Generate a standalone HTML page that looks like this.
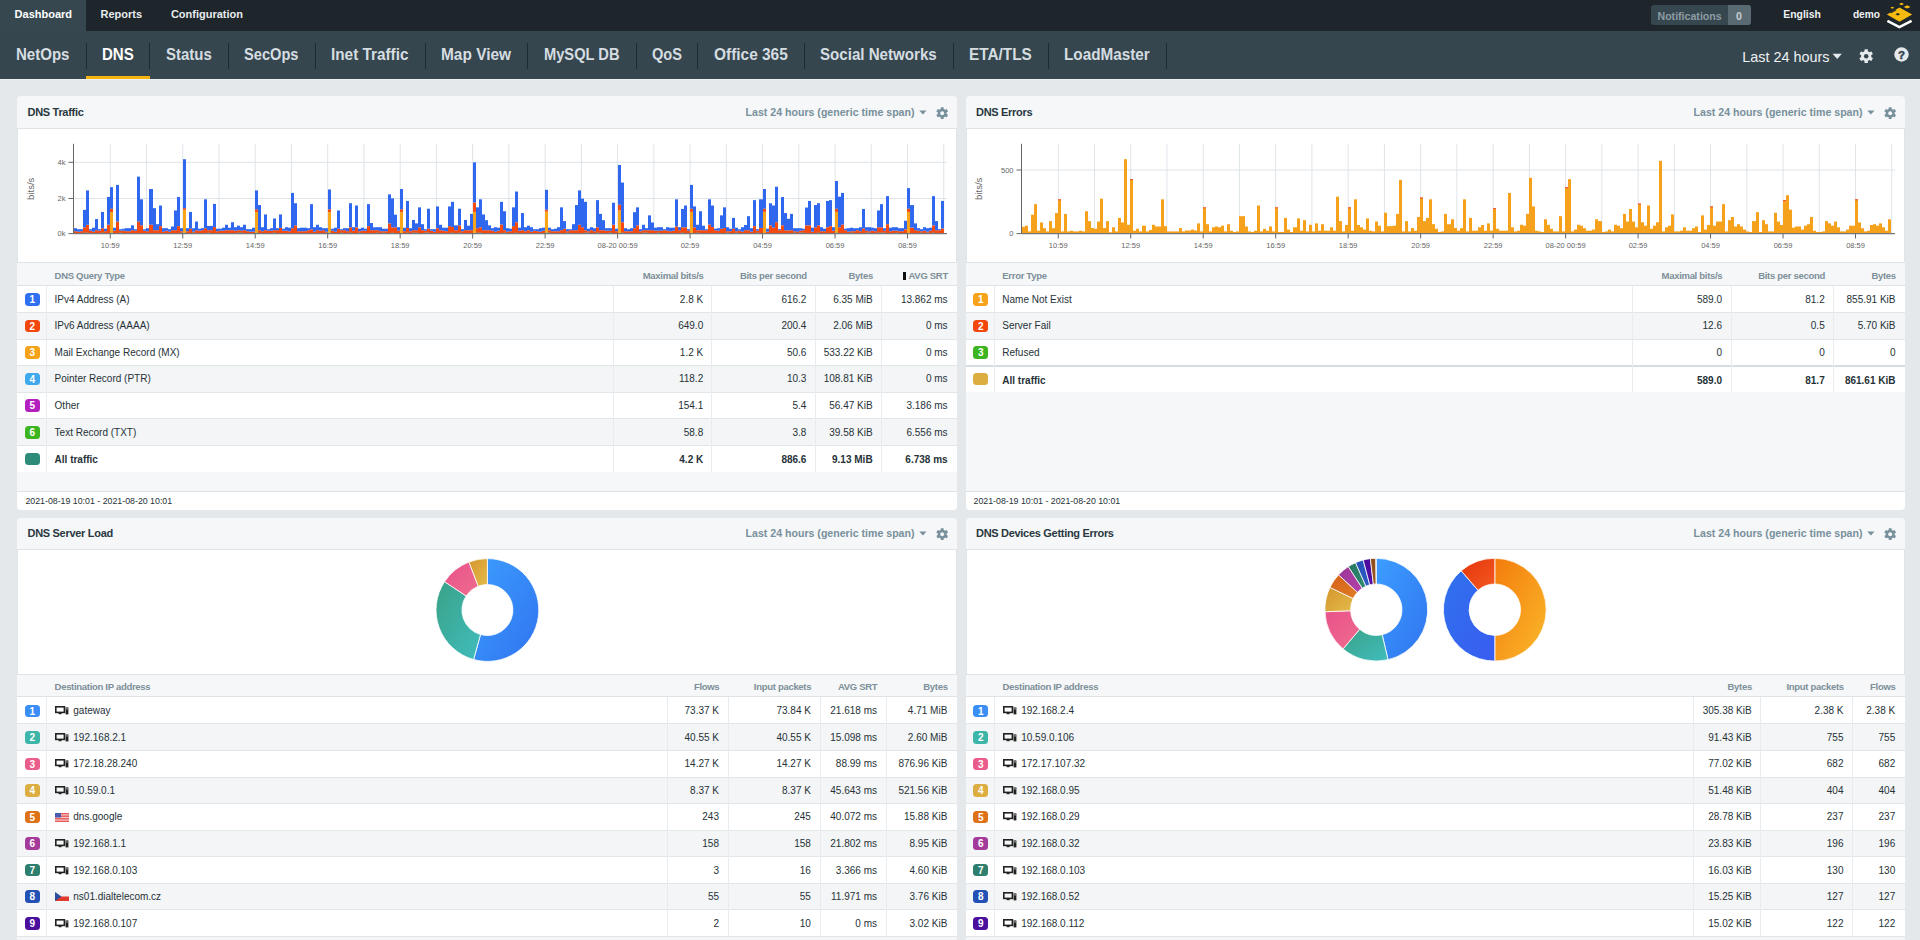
<!DOCTYPE html><html><head><meta charset="utf-8"><style>
html,body{margin:0;padding:0;width:1920px;height:940px;overflow:hidden;background:#e4e8eb;font-family:"Liberation Sans", sans-serif;}
.r{position:absolute;box-sizing:border-box}
.t{position:absolute;white-space:nowrap;line-height:1.2}
svg text{font-family:"Liberation Sans",sans-serif}
</style></head><body>
<div class="r" style="left:0px;top:0px;width:1920px;height:31px;background:#1e252b;"></div>
<div class="r" style="left:0px;top:0px;width:86px;height:31px;background:#37474f;"></div>
<div class="t" style="left:14.60px;top:7.60px;font-size:11px;font-weight:700;color:#ffffff;">Dashboard</div>
<div class="t" style="left:100.50px;top:7.60px;font-size:11px;font-weight:700;color:#e8ecee;">Reports</div>
<div class="t" style="left:170.90px;top:7.60px;font-size:11px;font-weight:700;color:#e8ecee;">Configuration</div>
<div class="r" style="left:1651px;top:5px;width:100px;height:20px;background:#37474f;border-radius:3px"></div>
<div class="r" style="left:1728px;top:5px;width:23px;height:20px;background:#5a6a72;border-radius:0 3px 3px 0"></div>
<div class="t" style="left:1657.50px;top:9.84px;font-size:10.6px;font-weight:700;color:#8d9ca4;">Notifications</div>
<div class="t" style="left:1736.00px;top:9.84px;font-size:10.6px;font-weight:700;color:#c9d1d5;">0</div>
<div class="t" style="left:1783.30px;top:8.96px;font-size:10.4px;font-weight:700;color:#eef1f3;">English</div>
<div class="t" style="left:1852.90px;top:9.08px;font-size:10.2px;font-weight:700;color:#eef1f3;">demo</div>
<svg style="position:absolute;left:1880px;top:0px" width="40" height="31" viewBox="1880 0 40 31">
<path d="M1886.9 14.4 L1899.5 7.6 L1912.2 14.4 L1899.5 21.8 Z" fill="#f6bb0e"/>
<path d="M1895.3 14.2 L1897.8 12.9 L1900.2 14.2 L1897.8 15.5 Z" fill="#1e252b"/>
<path d="M1890.2 12.6 L1895.6 9.7 L1896.6 10.3 L1891.2 13.2 Z" fill="#1e252b"/>
<path d="M1890.3 7.7 L1892.3 6.7 L1894.3 7.7 L1892.3 8.7 Z" fill="#f6bb0e"/>
<path d="M1899 4 L1901.5 2.7 L1904 4 L1901.5 5.3 Z" fill="#f6bb0e"/>
<path d="M1903.7 6.9 L1907.1 5.2 L1910.5 6.9 L1907.1 8.6 Z" fill="#f6bb0e"/>
<path d="M1887.4 20.9 L1899.4 27 L1911.6 20.9" fill="none" stroke="#ffffff" stroke-width="2.5" stroke-linejoin="miter"/>
</svg>
<div class="r" style="left:0px;top:31px;width:1920px;height:48px;background:#36464e;"></div>
<div class="t" style="left:16.2px;top:44.6px;font-size:16px;font-weight:700;color:#d5dde1;transform:scaleX(0.940);transform-origin:0 0">NetOps</div>
<div class="t" style="left:101.6px;top:44.6px;font-size:16px;font-weight:700;color:#ffffff;transform:scaleX(0.941);transform-origin:0 0">DNS</div>
<div class="t" style="left:165.5px;top:44.6px;font-size:16px;font-weight:700;color:#d5dde1;transform:scaleX(0.935);transform-origin:0 0">Status</div>
<div class="t" style="left:243.75px;top:44.6px;font-size:16px;font-weight:700;color:#d5dde1;transform:scaleX(0.914);transform-origin:0 0">SecOps</div>
<div class="t" style="left:330.75px;top:44.6px;font-size:16px;font-weight:700;color:#d5dde1;transform:scaleX(0.958);transform-origin:0 0">Inet Traffic</div>
<div class="t" style="left:440.8px;top:44.6px;font-size:16px;font-weight:700;color:#d5dde1;transform:scaleX(0.964);transform-origin:0 0">Map View</div>
<div class="t" style="left:543.75px;top:44.6px;font-size:16px;font-weight:700;color:#d5dde1;transform:scaleX(0.916);transform-origin:0 0">MySQL DB</div>
<div class="t" style="left:651.7px;top:44.6px;font-size:16px;font-weight:700;color:#d5dde1;transform:scaleX(0.912);transform-origin:0 0">QoS</div>
<div class="t" style="left:713.75px;top:44.6px;font-size:16px;font-weight:700;color:#d5dde1;transform:scaleX(0.964);transform-origin:0 0">Office 365</div>
<div class="t" style="left:820px;top:44.6px;font-size:16px;font-weight:700;color:#d5dde1;transform:scaleX(0.944);transform-origin:0 0">Social Networks</div>
<div class="t" style="left:969.2px;top:44.6px;font-size:16px;font-weight:700;color:#d5dde1;transform:scaleX(0.959);transform-origin:0 0">ETA/TLS</div>
<div class="t" style="left:1064.2px;top:44.6px;font-size:16px;font-weight:700;color:#d5dde1;transform:scaleX(0.955);transform-origin:0 0">LoadMaster</div>
<div class="r" style="left:85.8px;top:43px;width:1px;height:26px;background:#1f2a30;"></div>
<div class="r" style="left:149.1px;top:43px;width:1px;height:26px;background:#1f2a30;"></div>
<div class="r" style="left:228.1px;top:43px;width:1px;height:26px;background:#1f2a30;"></div>
<div class="r" style="left:315.0px;top:43px;width:1px;height:26px;background:#1f2a30;"></div>
<div class="r" style="left:425.1px;top:43px;width:1px;height:26px;background:#1f2a30;"></div>
<div class="r" style="left:527.0px;top:43px;width:1px;height:26px;background:#1f2a30;"></div>
<div class="r" style="left:636.2px;top:43px;width:1px;height:26px;background:#1f2a30;"></div>
<div class="r" style="left:697.0px;top:43px;width:1px;height:26px;background:#1f2a30;"></div>
<div class="r" style="left:804.1px;top:43px;width:1px;height:26px;background:#1f2a30;"></div>
<div class="r" style="left:952.8px;top:43px;width:1px;height:26px;background:#1f2a30;"></div>
<div class="r" style="left:1048.2px;top:43px;width:1px;height:26px;background:#1f2a30;"></div>
<div class="r" style="left:1166.2px;top:43px;width:1px;height:26px;background:#1f2a30;"></div>
<div class="r" style="left:86px;top:76px;width:63.5px;height:3px;background:#f6b50e;"></div>
<div class="t" style="left:1742.20px;top:49.16px;font-size:14.4px;font-weight:400;color:#eef1f3;">Last 24 hours</div>
<svg style="position:absolute;left:1832px;top:53px" width="11" height="7" viewBox="0 0 11 7"><path d="M0.5 0.8h9.4L5.2 6z" fill="#e6eaec"/></svg>
<svg style="position:absolute;left:1859.11px;top:48.61px" width="14.38" height="14.38" viewBox="-6.2 -6.2 12.4 12.4"><circle cx="0" cy="0" r="4.4" fill="#e6eaec"/><rect x="-1.45" y="-5.95" width="2.9" height="11.9" rx="0.3" fill="#e6eaec" transform="rotate(0)"/><rect x="-1.45" y="-5.95" width="2.9" height="11.9" rx="0.3" fill="#e6eaec" transform="rotate(60)"/><rect x="-1.45" y="-5.95" width="2.9" height="11.9" rx="0.3" fill="#e6eaec" transform="rotate(120)"/><circle cx="0" cy="0" r="1.95" fill="#36464e"/></svg>
<svg style="position:absolute;left:1893px;top:46px" width="17" height="17" viewBox="0 0 17 17"><circle cx="8.5" cy="8.5" r="7.2" fill="#e6eaec"/><text x="8.5" y="12.6" text-anchor="middle" font-size="11.5" font-weight="700" fill="#36464e" stroke="#36464e" stroke-width="0.5">?</text></svg>
<div class="r" style="left:0px;top:79px;width:1920px;height:1px;background:#eef1f3;"></div>
<div class="r" style="left:17px;top:96px;width:940px;height:414px;background:#fff;border-radius:4px;border:1px solid #dfe4e7;overflow:hidden"></div>
<div class="r" style="left:17px;top:96px;width:940px;height:33px;background:#f5f7f8;border-radius:4px 4px 0 0;border-bottom:1px solid #dde3e6"></div>
<div class="t" style="left:27.50px;top:106.20px;font-size:11px;font-weight:700;color:#2a3840;letter-spacing:-0.3px">DNS Traffic</div>
<div class="t" style="right:1005.50px;top:105.64px;font-size:10.6px;font-weight:700;color:#78909c;text-align:right;letter-spacing:0px">Last 24 hours (generic time span)</div>
<svg style="position:absolute;left:918.5px;top:110px" width="8" height="5" viewBox="0 0 8 5"><path d="M0.3 0.5h7.2L3.9 4.6z" fill="#78909c"/></svg>
<svg style="position:absolute;left:936.00px;top:106.60px" width="12.40" height="12.40" viewBox="-6.2 -6.2 12.4 12.4"><circle cx="0" cy="0" r="4.4" fill="#78909c"/><rect x="-1.45" y="-5.95" width="2.9" height="11.9" rx="0.3" fill="#78909c" transform="rotate(0)"/><rect x="-1.45" y="-5.95" width="2.9" height="11.9" rx="0.3" fill="#78909c" transform="rotate(60)"/><rect x="-1.45" y="-5.95" width="2.9" height="11.9" rx="0.3" fill="#78909c" transform="rotate(120)"/><circle cx="0" cy="0" r="1.95" fill="#f5f7f8"/></svg>
<div class="r" style="left:17px;top:471.5px;width:940px;height:20px;background:#f5f7f8;"></div>
<div class="r" style="left:17px;top:262px;width:940px;height:23.8px;background:#f5f7f8;border-top:1px solid #dde3e6;border-bottom:1px solid #dde3e6"></div>
<div class="t" style="left:54.60px;top:270.10px;font-size:9.5px;font-weight:700;color:#7d8f98;letter-spacing:-0.3px">DNS Query Type</div>
<div class="t" style="right:1216.50px;top:270.10px;font-size:9.5px;font-weight:700;color:#7d8f98;text-align:right;letter-spacing:-0.3px">Maximal bits/s</div>
<div class="t" style="right:1113.30px;top:270.10px;font-size:9.5px;font-weight:700;color:#7d8f98;text-align:right;letter-spacing:-0.3px">Bits per second</div>
<div class="t" style="right:1047.10px;top:270.10px;font-size:9.5px;font-weight:700;color:#7d8f98;text-align:right;letter-spacing:-0.3px">Bytes</div>
<div class="r" style="left:903.4px;top:271.59999999999997px;width:3px;height:8.4px;background:#111;"></div>
<div class="t" style="right:972.10px;top:270.10px;font-size:9.5px;font-weight:700;color:#7d8f98;text-align:right;letter-spacing:-0.3px">AVG SRT</div>
<div class="r" style="left:17px;top:285.80px;width:940px;height:26.60px;background:#ffffff"></div>
<div class="r" style="left:17px;top:312.40px;width:940px;height:26.60px;background:#f3f5f6"></div>
<div class="r" style="left:17px;top:339.00px;width:940px;height:26.60px;background:#ffffff"></div>
<div class="r" style="left:17px;top:365.60px;width:940px;height:26.60px;background:#f3f5f6"></div>
<div class="r" style="left:17px;top:392.20px;width:940px;height:26.60px;background:#ffffff"></div>
<div class="r" style="left:17px;top:418.80px;width:940px;height:26.60px;background:#f3f5f6"></div>
<div class="r" style="left:17px;top:445.40px;width:940px;height:26.60px;background:#ffffff"></div>
<div class="r" style="left:17px;top:311.90px;width:940px;height:1px;background:#e1e6e9"></div>
<div class="r" style="left:17px;top:338.50px;width:940px;height:1px;background:#e1e6e9"></div>
<div class="r" style="left:17px;top:365.10px;width:940px;height:1px;background:#e1e6e9"></div>
<div class="r" style="left:17px;top:391.70px;width:940px;height:1px;background:#e1e6e9"></div>
<div class="r" style="left:17px;top:418.30px;width:940px;height:1px;background:#e1e6e9"></div>
<div class="r" style="left:17px;top:444.90px;width:940px;height:1px;background:#e1e6e9"></div>
<div class="r" style="left:46px;top:285.80px;width:1px;height:26.60px;background:#e8ecf0"></div>
<div class="r" style="left:613px;top:285.80px;width:1px;height:26.60px;background:#e8ecf0"></div>
<div class="r" style="left:711px;top:285.80px;width:1px;height:26.60px;background:#e8ecf0"></div>
<div class="r" style="left:815px;top:285.80px;width:1px;height:26.60px;background:#e8ecf0"></div>
<div class="r" style="left:881px;top:285.80px;width:1px;height:26.60px;background:#e8ecf0"></div>
<div class="r" style="left:24.8px;top:293.00px;width:15px;height:12.6px;border-radius:3.5px;background:#2f6ff0;color:#fff;font-size:10px;font-weight:700;text-align:center;line-height:13px">1</div>
<div class="t" style="left:54.60px;top:293.65px;font-size:10px;font-weight:400;color:#263238;">IPv4 Address (A)</div>
<div class="t" style="right:1216.80px;top:293.65px;font-size:10px;font-weight:400;color:#263238;text-align:right;">2.8 K</div>
<div class="t" style="right:1113.60px;top:293.65px;font-size:10px;font-weight:400;color:#263238;text-align:right;">616.2</div>
<div class="t" style="right:1047.40px;top:293.65px;font-size:10px;font-weight:400;color:#263238;text-align:right;">6.35 MiB</div>
<div class="t" style="right:972.40px;top:293.65px;font-size:10px;font-weight:400;color:#263238;text-align:right;">13.862 ms</div>
<div class="r" style="left:46px;top:312.40px;width:1px;height:26.60px;background:#e8ecf0"></div>
<div class="r" style="left:613px;top:312.40px;width:1px;height:26.60px;background:#e8ecf0"></div>
<div class="r" style="left:711px;top:312.40px;width:1px;height:26.60px;background:#e8ecf0"></div>
<div class="r" style="left:815px;top:312.40px;width:1px;height:26.60px;background:#e8ecf0"></div>
<div class="r" style="left:881px;top:312.40px;width:1px;height:26.60px;background:#e8ecf0"></div>
<div class="r" style="left:24.8px;top:319.60px;width:15px;height:12.6px;border-radius:3.5px;background:#f2460d;color:#fff;font-size:10px;font-weight:700;text-align:center;line-height:13px">2</div>
<div class="t" style="left:54.60px;top:320.25px;font-size:10px;font-weight:400;color:#263238;">IPv6 Address (AAAA)</div>
<div class="t" style="right:1216.80px;top:320.25px;font-size:10px;font-weight:400;color:#263238;text-align:right;">649.0</div>
<div class="t" style="right:1113.60px;top:320.25px;font-size:10px;font-weight:400;color:#263238;text-align:right;">200.4</div>
<div class="t" style="right:1047.40px;top:320.25px;font-size:10px;font-weight:400;color:#263238;text-align:right;">2.06 MiB</div>
<div class="t" style="right:972.40px;top:320.25px;font-size:10px;font-weight:400;color:#263238;text-align:right;">0 ms</div>
<div class="r" style="left:46px;top:339.00px;width:1px;height:26.60px;background:#e8ecf0"></div>
<div class="r" style="left:613px;top:339.00px;width:1px;height:26.60px;background:#e8ecf0"></div>
<div class="r" style="left:711px;top:339.00px;width:1px;height:26.60px;background:#e8ecf0"></div>
<div class="r" style="left:815px;top:339.00px;width:1px;height:26.60px;background:#e8ecf0"></div>
<div class="r" style="left:881px;top:339.00px;width:1px;height:26.60px;background:#e8ecf0"></div>
<div class="r" style="left:24.8px;top:346.20px;width:15px;height:12.6px;border-radius:3.5px;background:#f7a21b;color:#fff;font-size:10px;font-weight:700;text-align:center;line-height:13px">3</div>
<div class="t" style="left:54.60px;top:346.85px;font-size:10px;font-weight:400;color:#263238;">Mail Exchange Record (MX)</div>
<div class="t" style="right:1216.80px;top:346.85px;font-size:10px;font-weight:400;color:#263238;text-align:right;">1.2 K</div>
<div class="t" style="right:1113.60px;top:346.85px;font-size:10px;font-weight:400;color:#263238;text-align:right;">50.6</div>
<div class="t" style="right:1047.40px;top:346.85px;font-size:10px;font-weight:400;color:#263238;text-align:right;">533.22 KiB</div>
<div class="t" style="right:972.40px;top:346.85px;font-size:10px;font-weight:400;color:#263238;text-align:right;">0 ms</div>
<div class="r" style="left:46px;top:365.60px;width:1px;height:26.60px;background:#e8ecf0"></div>
<div class="r" style="left:613px;top:365.60px;width:1px;height:26.60px;background:#e8ecf0"></div>
<div class="r" style="left:711px;top:365.60px;width:1px;height:26.60px;background:#e8ecf0"></div>
<div class="r" style="left:815px;top:365.60px;width:1px;height:26.60px;background:#e8ecf0"></div>
<div class="r" style="left:881px;top:365.60px;width:1px;height:26.60px;background:#e8ecf0"></div>
<div class="r" style="left:24.8px;top:372.80px;width:15px;height:12.6px;border-radius:3.5px;background:#3fa9ec;color:#fff;font-size:10px;font-weight:700;text-align:center;line-height:13px">4</div>
<div class="t" style="left:54.60px;top:373.45px;font-size:10px;font-weight:400;color:#263238;">Pointer Record (PTR)</div>
<div class="t" style="right:1216.80px;top:373.45px;font-size:10px;font-weight:400;color:#263238;text-align:right;">118.2</div>
<div class="t" style="right:1113.60px;top:373.45px;font-size:10px;font-weight:400;color:#263238;text-align:right;">10.3</div>
<div class="t" style="right:1047.40px;top:373.45px;font-size:10px;font-weight:400;color:#263238;text-align:right;">108.81 KiB</div>
<div class="t" style="right:972.40px;top:373.45px;font-size:10px;font-weight:400;color:#263238;text-align:right;">0 ms</div>
<div class="r" style="left:46px;top:392.20px;width:1px;height:26.60px;background:#e8ecf0"></div>
<div class="r" style="left:613px;top:392.20px;width:1px;height:26.60px;background:#e8ecf0"></div>
<div class="r" style="left:711px;top:392.20px;width:1px;height:26.60px;background:#e8ecf0"></div>
<div class="r" style="left:815px;top:392.20px;width:1px;height:26.60px;background:#e8ecf0"></div>
<div class="r" style="left:881px;top:392.20px;width:1px;height:26.60px;background:#e8ecf0"></div>
<div class="r" style="left:24.8px;top:399.40px;width:15px;height:12.6px;border-radius:3.5px;background:#b41fc0;color:#fff;font-size:10px;font-weight:700;text-align:center;line-height:13px">5</div>
<div class="t" style="left:54.60px;top:400.05px;font-size:10px;font-weight:400;color:#263238;">Other</div>
<div class="t" style="right:1216.80px;top:400.05px;font-size:10px;font-weight:400;color:#263238;text-align:right;">154.1</div>
<div class="t" style="right:1113.60px;top:400.05px;font-size:10px;font-weight:400;color:#263238;text-align:right;">5.4</div>
<div class="t" style="right:1047.40px;top:400.05px;font-size:10px;font-weight:400;color:#263238;text-align:right;">56.47 KiB</div>
<div class="t" style="right:972.40px;top:400.05px;font-size:10px;font-weight:400;color:#263238;text-align:right;">3.186 ms</div>
<div class="r" style="left:46px;top:418.80px;width:1px;height:26.60px;background:#e8ecf0"></div>
<div class="r" style="left:613px;top:418.80px;width:1px;height:26.60px;background:#e8ecf0"></div>
<div class="r" style="left:711px;top:418.80px;width:1px;height:26.60px;background:#e8ecf0"></div>
<div class="r" style="left:815px;top:418.80px;width:1px;height:26.60px;background:#e8ecf0"></div>
<div class="r" style="left:881px;top:418.80px;width:1px;height:26.60px;background:#e8ecf0"></div>
<div class="r" style="left:24.8px;top:426.00px;width:15px;height:12.6px;border-radius:3.5px;background:#3cb521;color:#fff;font-size:10px;font-weight:700;text-align:center;line-height:13px">6</div>
<div class="t" style="left:54.60px;top:426.65px;font-size:10px;font-weight:400;color:#263238;">Text Record (TXT)</div>
<div class="t" style="right:1216.80px;top:426.65px;font-size:10px;font-weight:400;color:#263238;text-align:right;">58.8</div>
<div class="t" style="right:1113.60px;top:426.65px;font-size:10px;font-weight:400;color:#263238;text-align:right;">3.8</div>
<div class="t" style="right:1047.40px;top:426.65px;font-size:10px;font-weight:400;color:#263238;text-align:right;">39.58 KiB</div>
<div class="t" style="right:972.40px;top:426.65px;font-size:10px;font-weight:400;color:#263238;text-align:right;">6.556 ms</div>
<div class="r" style="left:46px;top:445.40px;width:1px;height:26.60px;background:#e8ecf0"></div>
<div class="r" style="left:613px;top:445.40px;width:1px;height:26.60px;background:#e8ecf0"></div>
<div class="r" style="left:711px;top:445.40px;width:1px;height:26.60px;background:#e8ecf0"></div>
<div class="r" style="left:815px;top:445.40px;width:1px;height:26.60px;background:#e8ecf0"></div>
<div class="r" style="left:881px;top:445.40px;width:1px;height:26.60px;background:#e8ecf0"></div>
<div class="r" style="left:24.8px;top:452.60px;width:15px;height:12.6px;border-radius:3.5px;background:#2e8b7a;color:#fff;font-size:10px;font-weight:700;text-align:center;line-height:13px"></div>
<div class="t" style="left:54.60px;top:454.35px;font-size:10px;font-weight:700;color:#263238;">All traffic</div>
<div class="t" style="right:1216.80px;top:454.35px;font-size:10px;font-weight:700;color:#263238;text-align:right;">4.2 K</div>
<div class="t" style="right:1113.60px;top:454.35px;font-size:10px;font-weight:700;color:#263238;text-align:right;">886.6</div>
<div class="t" style="right:1047.40px;top:454.35px;font-size:10px;font-weight:700;color:#263238;text-align:right;">9.13 MiB</div>
<div class="t" style="right:972.40px;top:454.35px;font-size:10px;font-weight:700;color:#263238;text-align:right;">6.738 ms</div>
<div class="r" style="left:17px;top:491px;width:940px;height:19.2px;background:#fff;border-top:1px solid #dde3e6;border-radius:0 0 4px 4px"></div>
<div class="t" style="left:25.40px;top:495.72px;font-size:8.8px;font-weight:400;color:#263238;">2021-08-19 10:01 - 2021-08-20 10:01</div>
<div class="r" style="left:965.5px;top:96px;width:939.5px;height:414px;background:#fff;border-radius:4px;border:1px solid #dfe4e7;overflow:hidden"></div>
<div class="r" style="left:965.5px;top:96px;width:939.5px;height:33px;background:#f5f7f8;border-radius:4px 4px 0 0;border-bottom:1px solid #dde3e6"></div>
<div class="t" style="left:976.00px;top:106.20px;font-size:11px;font-weight:700;color:#2a3840;letter-spacing:-0.3px">DNS Errors</div>
<div class="t" style="right:57.50px;top:105.64px;font-size:10.6px;font-weight:700;color:#78909c;text-align:right;letter-spacing:0px">Last 24 hours (generic time span)</div>
<svg style="position:absolute;left:1866.5px;top:110px" width="8" height="5" viewBox="0 0 8 5"><path d="M0.3 0.5h7.2L3.9 4.6z" fill="#78909c"/></svg>
<svg style="position:absolute;left:1884.00px;top:106.60px" width="12.40" height="12.40" viewBox="-6.2 -6.2 12.4 12.4"><circle cx="0" cy="0" r="4.4" fill="#78909c"/><rect x="-1.45" y="-5.95" width="2.9" height="11.9" rx="0.3" fill="#78909c" transform="rotate(0)"/><rect x="-1.45" y="-5.95" width="2.9" height="11.9" rx="0.3" fill="#78909c" transform="rotate(60)"/><rect x="-1.45" y="-5.95" width="2.9" height="11.9" rx="0.3" fill="#78909c" transform="rotate(120)"/><circle cx="0" cy="0" r="1.95" fill="#f5f7f8"/></svg>
<div class="r" style="left:965.5px;top:391.7px;width:939.5px;height:100px;background:#f5f7f8;"></div>
<div class="r" style="left:965.5px;top:262px;width:939.5px;height:23.8px;background:#f5f7f8;border-top:1px solid #dde3e6;border-bottom:1px solid #dde3e6"></div>
<div class="t" style="left:1002.30px;top:270.10px;font-size:9.5px;font-weight:700;color:#7d8f98;letter-spacing:-0.3px">Error Type</div>
<div class="t" style="right:197.70px;top:270.10px;font-size:9.5px;font-weight:700;color:#7d8f98;text-align:right;letter-spacing:-0.3px">Maximal bits/s</div>
<div class="t" style="right:95.00px;top:270.10px;font-size:9.5px;font-weight:700;color:#7d8f98;text-align:right;letter-spacing:-0.3px">Bits per second</div>
<div class="t" style="right:24.20px;top:270.10px;font-size:9.5px;font-weight:700;color:#7d8f98;text-align:right;letter-spacing:-0.3px">Bytes</div>
<div class="r" style="left:965.5px;top:285.80px;width:939.5px;height:26.60px;background:#ffffff"></div>
<div class="r" style="left:965.5px;top:312.40px;width:939.5px;height:26.60px;background:#f3f5f6"></div>
<div class="r" style="left:965.5px;top:339.00px;width:939.5px;height:26.60px;background:#ffffff"></div>
<div class="r" style="left:965.5px;top:365.60px;width:939.5px;height:26.60px;background:#ffffff"></div>
<div class="r" style="left:965.5px;top:311.90px;width:939.5px;height:1px;background:#e1e6e9"></div>
<div class="r" style="left:965.5px;top:338.50px;width:939.5px;height:1px;background:#e1e6e9"></div>
<div class="r" style="left:965.5px;top:364.60px;width:939.5px;height:2px;background:#d5dde1"></div>
<div class="r" style="left:994.4px;top:285.80px;width:1px;height:26.60px;background:#e8ecf0"></div>
<div class="r" style="left:1632px;top:285.80px;width:1px;height:26.60px;background:#e8ecf0"></div>
<div class="r" style="left:1731px;top:285.80px;width:1px;height:26.60px;background:#e8ecf0"></div>
<div class="r" style="left:1833px;top:285.80px;width:1px;height:26.60px;background:#e8ecf0"></div>
<div class="r" style="left:973.3px;top:293.00px;width:15px;height:12.6px;border-radius:3.5px;background:#f7a21b;color:#fff;font-size:10px;font-weight:700;text-align:center;line-height:13px">1</div>
<div class="t" style="left:1002.30px;top:293.65px;font-size:10px;font-weight:400;color:#263238;">Name Not Exist</div>
<div class="t" style="right:198.00px;top:293.65px;font-size:10px;font-weight:400;color:#263238;text-align:right;">589.0</div>
<div class="t" style="right:95.30px;top:293.65px;font-size:10px;font-weight:400;color:#263238;text-align:right;">81.2</div>
<div class="t" style="right:24.50px;top:293.65px;font-size:10px;font-weight:400;color:#263238;text-align:right;">855.91 KiB</div>
<div class="r" style="left:994.4px;top:312.40px;width:1px;height:26.60px;background:#e8ecf0"></div>
<div class="r" style="left:1632px;top:312.40px;width:1px;height:26.60px;background:#e8ecf0"></div>
<div class="r" style="left:1731px;top:312.40px;width:1px;height:26.60px;background:#e8ecf0"></div>
<div class="r" style="left:1833px;top:312.40px;width:1px;height:26.60px;background:#e8ecf0"></div>
<div class="r" style="left:973.3px;top:319.60px;width:15px;height:12.6px;border-radius:3.5px;background:#f2460d;color:#fff;font-size:10px;font-weight:700;text-align:center;line-height:13px">2</div>
<div class="t" style="left:1002.30px;top:320.25px;font-size:10px;font-weight:400;color:#263238;">Server Fail</div>
<div class="t" style="right:198.00px;top:320.25px;font-size:10px;font-weight:400;color:#263238;text-align:right;">12.6</div>
<div class="t" style="right:95.30px;top:320.25px;font-size:10px;font-weight:400;color:#263238;text-align:right;">0.5</div>
<div class="t" style="right:24.50px;top:320.25px;font-size:10px;font-weight:400;color:#263238;text-align:right;">5.70 KiB</div>
<div class="r" style="left:994.4px;top:339.00px;width:1px;height:26.60px;background:#e8ecf0"></div>
<div class="r" style="left:1632px;top:339.00px;width:1px;height:26.60px;background:#e8ecf0"></div>
<div class="r" style="left:1731px;top:339.00px;width:1px;height:26.60px;background:#e8ecf0"></div>
<div class="r" style="left:1833px;top:339.00px;width:1px;height:26.60px;background:#e8ecf0"></div>
<div class="r" style="left:973.3px;top:346.20px;width:15px;height:12.6px;border-radius:3.5px;background:#3cb521;color:#fff;font-size:10px;font-weight:700;text-align:center;line-height:13px">3</div>
<div class="t" style="left:1002.30px;top:346.85px;font-size:10px;font-weight:400;color:#263238;">Refused</div>
<div class="t" style="right:198.00px;top:346.85px;font-size:10px;font-weight:400;color:#263238;text-align:right;">0</div>
<div class="t" style="right:95.30px;top:346.85px;font-size:10px;font-weight:400;color:#263238;text-align:right;">0</div>
<div class="t" style="right:24.50px;top:346.85px;font-size:10px;font-weight:400;color:#263238;text-align:right;">0</div>
<div class="r" style="left:994.4px;top:365.60px;width:1px;height:26.60px;background:#e8ecf0"></div>
<div class="r" style="left:1632px;top:365.60px;width:1px;height:26.60px;background:#e8ecf0"></div>
<div class="r" style="left:1731px;top:365.60px;width:1px;height:26.60px;background:#e8ecf0"></div>
<div class="r" style="left:1833px;top:365.60px;width:1px;height:26.60px;background:#e8ecf0"></div>
<div class="r" style="left:973.3px;top:372.80px;width:15px;height:12.6px;border-radius:3.5px;background:#dcae41;color:#fff;font-size:10px;font-weight:700;text-align:center;line-height:13px"></div>
<div class="t" style="left:1002.30px;top:374.55px;font-size:10px;font-weight:700;color:#263238;">All traffic</div>
<div class="t" style="right:198.00px;top:374.55px;font-size:10px;font-weight:700;color:#263238;text-align:right;">589.0</div>
<div class="t" style="right:95.30px;top:374.55px;font-size:10px;font-weight:700;color:#263238;text-align:right;">81.7</div>
<div class="t" style="right:24.50px;top:374.55px;font-size:10px;font-weight:700;color:#263238;text-align:right;">861.61 KiB</div>
<div class="r" style="left:965.5px;top:491px;width:939.5px;height:19.2px;background:#fff;border-top:1px solid #dde3e6;border-radius:0 0 4px 4px"></div>
<div class="t" style="left:973.50px;top:495.72px;font-size:8.8px;font-weight:400;color:#263238;">2021-08-19 10:01 - 2021-08-20 10:01</div>
<div class="r" style="left:17px;top:518px;width:940px;height:430px;background:#fff;border-radius:4px;border:1px solid #dfe4e7;overflow:hidden"></div>
<div class="r" style="left:17px;top:518px;width:940px;height:32px;background:#f5f7f8;border-radius:4px 4px 0 0;border-bottom:1px solid #dde3e6"></div>
<div class="t" style="left:27.50px;top:527.35px;font-size:11px;font-weight:700;color:#2a3840;letter-spacing:-0.3px">DNS Server Load</div>
<div class="t" style="right:1005.50px;top:526.79px;font-size:10.6px;font-weight:700;color:#78909c;text-align:right;letter-spacing:0px">Last 24 hours (generic time span)</div>
<svg style="position:absolute;left:918.5px;top:531.15px" width="8" height="5" viewBox="0 0 8 5"><path d="M0.3 0.5h7.2L3.9 4.6z" fill="#78909c"/></svg>
<svg style="position:absolute;left:936.00px;top:527.75px" width="12.40" height="12.40" viewBox="-6.2 -6.2 12.4 12.4"><circle cx="0" cy="0" r="4.4" fill="#78909c"/><rect x="-1.45" y="-5.95" width="2.9" height="11.9" rx="0.3" fill="#78909c" transform="rotate(0)"/><rect x="-1.45" y="-5.95" width="2.9" height="11.9" rx="0.3" fill="#78909c" transform="rotate(60)"/><rect x="-1.45" y="-5.95" width="2.9" height="11.9" rx="0.3" fill="#78909c" transform="rotate(120)"/><circle cx="0" cy="0" r="1.95" fill="#f5f7f8"/></svg>
<div class="r" style="left:17px;top:674px;width:940px;height:23.4px;background:#f5f7f8;border-top:1px solid #dde3e6;border-bottom:1px solid #dde3e6"></div>
<div class="t" style="left:54.60px;top:681.20px;font-size:9.5px;font-weight:700;color:#7d8f98;letter-spacing:-0.3px">Destination IP address</div>
<div class="t" style="right:1200.70px;top:681.20px;font-size:9.5px;font-weight:700;color:#7d8f98;text-align:right;letter-spacing:-0.3px">Flows</div>
<div class="t" style="right:1108.80px;top:681.20px;font-size:9.5px;font-weight:700;color:#7d8f98;text-align:right;letter-spacing:-0.3px">Input packets</div>
<div class="t" style="right:1042.70px;top:681.20px;font-size:9.5px;font-weight:700;color:#7d8f98;text-align:right;letter-spacing:-0.3px">AVG SRT</div>
<div class="t" style="right:972.40px;top:681.20px;font-size:9.5px;font-weight:700;color:#7d8f98;text-align:right;letter-spacing:-0.3px">Bytes</div>
<div class="r" style="left:17px;top:697.40px;width:940px;height:26.55px;background:#ffffff"></div>
<div class="r" style="left:17px;top:723.95px;width:940px;height:26.55px;background:#f3f5f6"></div>
<div class="r" style="left:17px;top:750.50px;width:940px;height:26.55px;background:#ffffff"></div>
<div class="r" style="left:17px;top:777.05px;width:940px;height:26.55px;background:#f3f5f6"></div>
<div class="r" style="left:17px;top:803.60px;width:940px;height:26.55px;background:#ffffff"></div>
<div class="r" style="left:17px;top:830.15px;width:940px;height:26.55px;background:#f3f5f6"></div>
<div class="r" style="left:17px;top:856.70px;width:940px;height:26.55px;background:#ffffff"></div>
<div class="r" style="left:17px;top:883.25px;width:940px;height:26.55px;background:#f3f5f6"></div>
<div class="r" style="left:17px;top:909.80px;width:940px;height:26.55px;background:#ffffff"></div>
<div class="r" style="left:17px;top:936.35px;width:940px;height:26.55px;background:#f3f5f6"></div>
<div class="r" style="left:17px;top:935.85px;width:940px;height:1px;background:#e1e6e9"></div>
<div class="r" style="left:17px;top:723.45px;width:940px;height:1px;background:#e1e6e9"></div>
<div class="r" style="left:17px;top:750.00px;width:940px;height:1px;background:#e1e6e9"></div>
<div class="r" style="left:17px;top:776.55px;width:940px;height:1px;background:#e1e6e9"></div>
<div class="r" style="left:17px;top:803.10px;width:940px;height:1px;background:#e1e6e9"></div>
<div class="r" style="left:17px;top:829.65px;width:940px;height:1px;background:#e1e6e9"></div>
<div class="r" style="left:17px;top:856.20px;width:940px;height:1px;background:#e1e6e9"></div>
<div class="r" style="left:17px;top:882.75px;width:940px;height:1px;background:#e1e6e9"></div>
<div class="r" style="left:17px;top:909.30px;width:940px;height:1px;background:#e1e6e9"></div>
<div class="r" style="left:46px;top:697.40px;width:1px;height:26.55px;background:#e8ecf0"></div>
<div class="r" style="left:667px;top:697.40px;width:1px;height:26.55px;background:#e8ecf0"></div>
<div class="r" style="left:727.5px;top:697.40px;width:1px;height:26.55px;background:#e8ecf0"></div>
<div class="r" style="left:819.5px;top:697.40px;width:1px;height:26.55px;background:#e8ecf0"></div>
<div class="r" style="left:886.4px;top:697.40px;width:1px;height:26.55px;background:#e8ecf0"></div>
<div class="r" style="left:24.8px;top:704.58px;width:15px;height:12.6px;border-radius:3.5px;background:#3a8ef6;color:#fff;font-size:10px;font-weight:700;text-align:center;line-height:13px">1</div>
<svg style="position:absolute;left:54.60px;top:706.27px" width="14" height="9" viewBox="0 0 14 9"><rect x="0.8" y="0.8" width="8.6" height="5.6" fill="none" stroke="#222" stroke-width="1.6"/><rect x="3.6" y="6.6" width="3" height="1.6" fill="#222"/><rect x="10.6" y="1.4" width="2.8" height="7" fill="#222"/><rect x="11.4" y="2.4" width="1.2" height="1" fill="#fff"/></svg>
<div class="t" style="left:73.30px;top:705.23px;font-size:10px;font-weight:400;color:#263238;">gateway</div>
<div class="t" style="right:1201.00px;top:705.23px;font-size:10px;font-weight:400;color:#263238;text-align:right;">73.37 K</div>
<div class="t" style="right:1109.10px;top:705.23px;font-size:10px;font-weight:400;color:#263238;text-align:right;">73.84 K</div>
<div class="t" style="right:1043.00px;top:705.23px;font-size:10px;font-weight:400;color:#263238;text-align:right;">21.618 ms</div>
<div class="t" style="right:972.70px;top:705.23px;font-size:10px;font-weight:400;color:#263238;text-align:right;">4.71 MiB</div>
<div class="r" style="left:46px;top:723.95px;width:1px;height:26.55px;background:#e8ecf0"></div>
<div class="r" style="left:667px;top:723.95px;width:1px;height:26.55px;background:#e8ecf0"></div>
<div class="r" style="left:727.5px;top:723.95px;width:1px;height:26.55px;background:#e8ecf0"></div>
<div class="r" style="left:819.5px;top:723.95px;width:1px;height:26.55px;background:#e8ecf0"></div>
<div class="r" style="left:886.4px;top:723.95px;width:1px;height:26.55px;background:#e8ecf0"></div>
<div class="r" style="left:24.8px;top:731.12px;width:15px;height:12.6px;border-radius:3.5px;background:#3db5a8;color:#fff;font-size:10px;font-weight:700;text-align:center;line-height:13px">2</div>
<svg style="position:absolute;left:54.60px;top:732.82px" width="14" height="9" viewBox="0 0 14 9"><rect x="0.8" y="0.8" width="8.6" height="5.6" fill="none" stroke="#222" stroke-width="1.6"/><rect x="3.6" y="6.6" width="3" height="1.6" fill="#222"/><rect x="10.6" y="1.4" width="2.8" height="7" fill="#222"/><rect x="11.4" y="2.4" width="1.2" height="1" fill="#fff"/></svg>
<div class="t" style="left:73.30px;top:731.77px;font-size:10px;font-weight:400;color:#263238;">192.168.2.1</div>
<div class="t" style="right:1201.00px;top:731.77px;font-size:10px;font-weight:400;color:#263238;text-align:right;">40.55 K</div>
<div class="t" style="right:1109.10px;top:731.77px;font-size:10px;font-weight:400;color:#263238;text-align:right;">40.55 K</div>
<div class="t" style="right:1043.00px;top:731.77px;font-size:10px;font-weight:400;color:#263238;text-align:right;">15.098 ms</div>
<div class="t" style="right:972.70px;top:731.77px;font-size:10px;font-weight:400;color:#263238;text-align:right;">2.60 MiB</div>
<div class="r" style="left:46px;top:750.50px;width:1px;height:26.55px;background:#e8ecf0"></div>
<div class="r" style="left:667px;top:750.50px;width:1px;height:26.55px;background:#e8ecf0"></div>
<div class="r" style="left:727.5px;top:750.50px;width:1px;height:26.55px;background:#e8ecf0"></div>
<div class="r" style="left:819.5px;top:750.50px;width:1px;height:26.55px;background:#e8ecf0"></div>
<div class="r" style="left:886.4px;top:750.50px;width:1px;height:26.55px;background:#e8ecf0"></div>
<div class="r" style="left:24.8px;top:757.68px;width:15px;height:12.6px;border-radius:3.5px;background:#ea5d8a;color:#fff;font-size:10px;font-weight:700;text-align:center;line-height:13px">3</div>
<svg style="position:absolute;left:54.60px;top:759.38px" width="14" height="9" viewBox="0 0 14 9"><rect x="0.8" y="0.8" width="8.6" height="5.6" fill="none" stroke="#222" stroke-width="1.6"/><rect x="3.6" y="6.6" width="3" height="1.6" fill="#222"/><rect x="10.6" y="1.4" width="2.8" height="7" fill="#222"/><rect x="11.4" y="2.4" width="1.2" height="1" fill="#fff"/></svg>
<div class="t" style="left:73.30px;top:758.33px;font-size:10px;font-weight:400;color:#263238;">172.18.28.240</div>
<div class="t" style="right:1201.00px;top:758.33px;font-size:10px;font-weight:400;color:#263238;text-align:right;">14.27 K</div>
<div class="t" style="right:1109.10px;top:758.33px;font-size:10px;font-weight:400;color:#263238;text-align:right;">14.27 K</div>
<div class="t" style="right:1043.00px;top:758.33px;font-size:10px;font-weight:400;color:#263238;text-align:right;">88.99 ms</div>
<div class="t" style="right:972.70px;top:758.33px;font-size:10px;font-weight:400;color:#263238;text-align:right;">876.96 KiB</div>
<div class="r" style="left:46px;top:777.05px;width:1px;height:26.55px;background:#e8ecf0"></div>
<div class="r" style="left:667px;top:777.05px;width:1px;height:26.55px;background:#e8ecf0"></div>
<div class="r" style="left:727.5px;top:777.05px;width:1px;height:26.55px;background:#e8ecf0"></div>
<div class="r" style="left:819.5px;top:777.05px;width:1px;height:26.55px;background:#e8ecf0"></div>
<div class="r" style="left:886.4px;top:777.05px;width:1px;height:26.55px;background:#e8ecf0"></div>
<div class="r" style="left:24.8px;top:784.23px;width:15px;height:12.6px;border-radius:3.5px;background:#dcae41;color:#fff;font-size:10px;font-weight:700;text-align:center;line-height:13px">4</div>
<svg style="position:absolute;left:54.60px;top:785.92px" width="14" height="9" viewBox="0 0 14 9"><rect x="0.8" y="0.8" width="8.6" height="5.6" fill="none" stroke="#222" stroke-width="1.6"/><rect x="3.6" y="6.6" width="3" height="1.6" fill="#222"/><rect x="10.6" y="1.4" width="2.8" height="7" fill="#222"/><rect x="11.4" y="2.4" width="1.2" height="1" fill="#fff"/></svg>
<div class="t" style="left:73.30px;top:784.88px;font-size:10px;font-weight:400;color:#263238;">10.59.0.1</div>
<div class="t" style="right:1201.00px;top:784.88px;font-size:10px;font-weight:400;color:#263238;text-align:right;">8.37 K</div>
<div class="t" style="right:1109.10px;top:784.88px;font-size:10px;font-weight:400;color:#263238;text-align:right;">8.37 K</div>
<div class="t" style="right:1043.00px;top:784.88px;font-size:10px;font-weight:400;color:#263238;text-align:right;">45.643 ms</div>
<div class="t" style="right:972.70px;top:784.88px;font-size:10px;font-weight:400;color:#263238;text-align:right;">521.56 KiB</div>
<div class="r" style="left:46px;top:803.60px;width:1px;height:26.55px;background:#e8ecf0"></div>
<div class="r" style="left:667px;top:803.60px;width:1px;height:26.55px;background:#e8ecf0"></div>
<div class="r" style="left:727.5px;top:803.60px;width:1px;height:26.55px;background:#e8ecf0"></div>
<div class="r" style="left:819.5px;top:803.60px;width:1px;height:26.55px;background:#e8ecf0"></div>
<div class="r" style="left:886.4px;top:803.60px;width:1px;height:26.55px;background:#e8ecf0"></div>
<div class="r" style="left:24.8px;top:810.78px;width:15px;height:12.6px;border-radius:3.5px;background:#dd7219;color:#fff;font-size:10px;font-weight:700;text-align:center;line-height:13px">5</div>
<svg style="position:absolute;left:54.60px;top:812.78px" width="14" height="9" viewBox="0 0 14 9"><rect width="14" height="9" fill="#e85a5a"/><rect y="1.3" width="14" height="1.2" fill="#f3c8c8"/><rect y="3.9" width="14" height="1.2" fill="#f3c8c8"/><rect y="6.5" width="14" height="1.2" fill="#f3c8c8"/><rect width="6" height="4.5" fill="#4a5bb0"/></svg>
<div class="t" style="left:73.30px;top:811.43px;font-size:10px;font-weight:400;color:#263238;">dns.google</div>
<div class="t" style="right:1201.00px;top:811.43px;font-size:10px;font-weight:400;color:#263238;text-align:right;">243</div>
<div class="t" style="right:1109.10px;top:811.43px;font-size:10px;font-weight:400;color:#263238;text-align:right;">245</div>
<div class="t" style="right:1043.00px;top:811.43px;font-size:10px;font-weight:400;color:#263238;text-align:right;">40.072 ms</div>
<div class="t" style="right:972.70px;top:811.43px;font-size:10px;font-weight:400;color:#263238;text-align:right;">15.88 KiB</div>
<div class="r" style="left:46px;top:830.15px;width:1px;height:26.55px;background:#e8ecf0"></div>
<div class="r" style="left:667px;top:830.15px;width:1px;height:26.55px;background:#e8ecf0"></div>
<div class="r" style="left:727.5px;top:830.15px;width:1px;height:26.55px;background:#e8ecf0"></div>
<div class="r" style="left:819.5px;top:830.15px;width:1px;height:26.55px;background:#e8ecf0"></div>
<div class="r" style="left:886.4px;top:830.15px;width:1px;height:26.55px;background:#e8ecf0"></div>
<div class="r" style="left:24.8px;top:837.33px;width:15px;height:12.6px;border-radius:3.5px;background:#a43b9b;color:#fff;font-size:10px;font-weight:700;text-align:center;line-height:13px">6</div>
<svg style="position:absolute;left:54.60px;top:839.02px" width="14" height="9" viewBox="0 0 14 9"><rect x="0.8" y="0.8" width="8.6" height="5.6" fill="none" stroke="#222" stroke-width="1.6"/><rect x="3.6" y="6.6" width="3" height="1.6" fill="#222"/><rect x="10.6" y="1.4" width="2.8" height="7" fill="#222"/><rect x="11.4" y="2.4" width="1.2" height="1" fill="#fff"/></svg>
<div class="t" style="left:73.30px;top:837.98px;font-size:10px;font-weight:400;color:#263238;">192.168.1.1</div>
<div class="t" style="right:1201.00px;top:837.98px;font-size:10px;font-weight:400;color:#263238;text-align:right;">158</div>
<div class="t" style="right:1109.10px;top:837.98px;font-size:10px;font-weight:400;color:#263238;text-align:right;">158</div>
<div class="t" style="right:1043.00px;top:837.98px;font-size:10px;font-weight:400;color:#263238;text-align:right;">21.802 ms</div>
<div class="t" style="right:972.70px;top:837.98px;font-size:10px;font-weight:400;color:#263238;text-align:right;">8.95 KiB</div>
<div class="r" style="left:46px;top:856.70px;width:1px;height:26.55px;background:#e8ecf0"></div>
<div class="r" style="left:667px;top:856.70px;width:1px;height:26.55px;background:#e8ecf0"></div>
<div class="r" style="left:727.5px;top:856.70px;width:1px;height:26.55px;background:#e8ecf0"></div>
<div class="r" style="left:819.5px;top:856.70px;width:1px;height:26.55px;background:#e8ecf0"></div>
<div class="r" style="left:886.4px;top:856.70px;width:1px;height:26.55px;background:#e8ecf0"></div>
<div class="r" style="left:24.8px;top:863.88px;width:15px;height:12.6px;border-radius:3.5px;background:#2e7f6d;color:#fff;font-size:10px;font-weight:700;text-align:center;line-height:13px">7</div>
<svg style="position:absolute;left:54.60px;top:865.58px" width="14" height="9" viewBox="0 0 14 9"><rect x="0.8" y="0.8" width="8.6" height="5.6" fill="none" stroke="#222" stroke-width="1.6"/><rect x="3.6" y="6.6" width="3" height="1.6" fill="#222"/><rect x="10.6" y="1.4" width="2.8" height="7" fill="#222"/><rect x="11.4" y="2.4" width="1.2" height="1" fill="#fff"/></svg>
<div class="t" style="left:73.30px;top:864.53px;font-size:10px;font-weight:400;color:#263238;">192.168.0.103</div>
<div class="t" style="right:1201.00px;top:864.53px;font-size:10px;font-weight:400;color:#263238;text-align:right;">3</div>
<div class="t" style="right:1109.10px;top:864.53px;font-size:10px;font-weight:400;color:#263238;text-align:right;">16</div>
<div class="t" style="right:1043.00px;top:864.53px;font-size:10px;font-weight:400;color:#263238;text-align:right;">3.366 ms</div>
<div class="t" style="right:972.70px;top:864.53px;font-size:10px;font-weight:400;color:#263238;text-align:right;">4.60 KiB</div>
<div class="r" style="left:46px;top:883.25px;width:1px;height:26.55px;background:#e8ecf0"></div>
<div class="r" style="left:667px;top:883.25px;width:1px;height:26.55px;background:#e8ecf0"></div>
<div class="r" style="left:727.5px;top:883.25px;width:1px;height:26.55px;background:#e8ecf0"></div>
<div class="r" style="left:819.5px;top:883.25px;width:1px;height:26.55px;background:#e8ecf0"></div>
<div class="r" style="left:886.4px;top:883.25px;width:1px;height:26.55px;background:#e8ecf0"></div>
<div class="r" style="left:24.8px;top:890.43px;width:15px;height:12.6px;border-radius:3.5px;background:#2451b5;color:#fff;font-size:10px;font-weight:700;text-align:center;line-height:13px">8</div>
<svg style="position:absolute;left:54.60px;top:892.43px" width="14" height="9" viewBox="0 0 14 9"><rect width="14" height="4.5" fill="#f1f1f1"/><rect y="4.5" width="14" height="4.5" fill="#e03a2c"/><path d="M0 0 L6.5 4.5 L0 9z" fill="#2c4ea0"/></svg>
<div class="t" style="left:73.30px;top:891.08px;font-size:10px;font-weight:400;color:#263238;">ns01.dialtelecom.cz</div>
<div class="t" style="right:1201.00px;top:891.08px;font-size:10px;font-weight:400;color:#263238;text-align:right;">55</div>
<div class="t" style="right:1109.10px;top:891.08px;font-size:10px;font-weight:400;color:#263238;text-align:right;">55</div>
<div class="t" style="right:1043.00px;top:891.08px;font-size:10px;font-weight:400;color:#263238;text-align:right;">11.971 ms</div>
<div class="t" style="right:972.70px;top:891.08px;font-size:10px;font-weight:400;color:#263238;text-align:right;">3.76 KiB</div>
<div class="r" style="left:46px;top:909.80px;width:1px;height:26.55px;background:#e8ecf0"></div>
<div class="r" style="left:667px;top:909.80px;width:1px;height:26.55px;background:#e8ecf0"></div>
<div class="r" style="left:727.5px;top:909.80px;width:1px;height:26.55px;background:#e8ecf0"></div>
<div class="r" style="left:819.5px;top:909.80px;width:1px;height:26.55px;background:#e8ecf0"></div>
<div class="r" style="left:886.4px;top:909.80px;width:1px;height:26.55px;background:#e8ecf0"></div>
<div class="r" style="left:24.8px;top:916.98px;width:15px;height:12.6px;border-radius:3.5px;background:#4b0f9e;color:#fff;font-size:10px;font-weight:700;text-align:center;line-height:13px">9</div>
<svg style="position:absolute;left:54.60px;top:918.67px" width="14" height="9" viewBox="0 0 14 9"><rect x="0.8" y="0.8" width="8.6" height="5.6" fill="none" stroke="#222" stroke-width="1.6"/><rect x="3.6" y="6.6" width="3" height="1.6" fill="#222"/><rect x="10.6" y="1.4" width="2.8" height="7" fill="#222"/><rect x="11.4" y="2.4" width="1.2" height="1" fill="#fff"/></svg>
<div class="t" style="left:73.30px;top:917.62px;font-size:10px;font-weight:400;color:#263238;">192.168.0.107</div>
<div class="t" style="right:1201.00px;top:917.62px;font-size:10px;font-weight:400;color:#263238;text-align:right;">2</div>
<div class="t" style="right:1109.10px;top:917.62px;font-size:10px;font-weight:400;color:#263238;text-align:right;">10</div>
<div class="t" style="right:1043.00px;top:917.62px;font-size:10px;font-weight:400;color:#263238;text-align:right;">0 ms</div>
<div class="t" style="right:972.70px;top:917.62px;font-size:10px;font-weight:400;color:#263238;text-align:right;">3.02 KiB</div>
<div class="r" style="left:965.5px;top:518px;width:939.5px;height:430px;background:#fff;border-radius:4px;border:1px solid #dfe4e7;overflow:hidden"></div>
<div class="r" style="left:965.5px;top:518px;width:939.5px;height:32px;background:#f5f7f8;border-radius:4px 4px 0 0;border-bottom:1px solid #dde3e6"></div>
<div class="t" style="left:976.00px;top:527.35px;font-size:11px;font-weight:700;color:#2a3840;letter-spacing:-0.3px">DNS Devices Getting Errors</div>
<div class="t" style="right:57.50px;top:526.79px;font-size:10.6px;font-weight:700;color:#78909c;text-align:right;letter-spacing:0px">Last 24 hours (generic time span)</div>
<svg style="position:absolute;left:1866.5px;top:531.15px" width="8" height="5" viewBox="0 0 8 5"><path d="M0.3 0.5h7.2L3.9 4.6z" fill="#78909c"/></svg>
<svg style="position:absolute;left:1884.00px;top:527.75px" width="12.40" height="12.40" viewBox="-6.2 -6.2 12.4 12.4"><circle cx="0" cy="0" r="4.4" fill="#78909c"/><rect x="-1.45" y="-5.95" width="2.9" height="11.9" rx="0.3" fill="#78909c" transform="rotate(0)"/><rect x="-1.45" y="-5.95" width="2.9" height="11.9" rx="0.3" fill="#78909c" transform="rotate(60)"/><rect x="-1.45" y="-5.95" width="2.9" height="11.9" rx="0.3" fill="#78909c" transform="rotate(120)"/><circle cx="0" cy="0" r="1.95" fill="#f5f7f8"/></svg>
<div class="r" style="left:965.5px;top:674px;width:939.5px;height:23.4px;background:#f5f7f8;border-top:1px solid #dde3e6;border-bottom:1px solid #dde3e6"></div>
<div class="t" style="left:1002.50px;top:681.20px;font-size:9.5px;font-weight:700;color:#7d8f98;letter-spacing:-0.3px">Destination IP address</div>
<div class="t" style="right:168.10px;top:681.20px;font-size:9.5px;font-weight:700;color:#7d8f98;text-align:right;letter-spacing:-0.3px">Bytes</div>
<div class="t" style="right:76.20px;top:681.20px;font-size:9.5px;font-weight:700;color:#7d8f98;text-align:right;letter-spacing:-0.3px">Input packets</div>
<div class="t" style="right:24.50px;top:681.20px;font-size:9.5px;font-weight:700;color:#7d8f98;text-align:right;letter-spacing:-0.3px">Flows</div>
<div class="r" style="left:965.5px;top:697.40px;width:939.5px;height:26.55px;background:#ffffff"></div>
<div class="r" style="left:965.5px;top:723.95px;width:939.5px;height:26.55px;background:#f3f5f6"></div>
<div class="r" style="left:965.5px;top:750.50px;width:939.5px;height:26.55px;background:#ffffff"></div>
<div class="r" style="left:965.5px;top:777.05px;width:939.5px;height:26.55px;background:#f3f5f6"></div>
<div class="r" style="left:965.5px;top:803.60px;width:939.5px;height:26.55px;background:#ffffff"></div>
<div class="r" style="left:965.5px;top:830.15px;width:939.5px;height:26.55px;background:#f3f5f6"></div>
<div class="r" style="left:965.5px;top:856.70px;width:939.5px;height:26.55px;background:#ffffff"></div>
<div class="r" style="left:965.5px;top:883.25px;width:939.5px;height:26.55px;background:#f3f5f6"></div>
<div class="r" style="left:965.5px;top:909.80px;width:939.5px;height:26.55px;background:#ffffff"></div>
<div class="r" style="left:965.5px;top:936.35px;width:939.5px;height:26.55px;background:#f3f5f6"></div>
<div class="r" style="left:965.5px;top:935.85px;width:939.5px;height:1px;background:#e1e6e9"></div>
<div class="r" style="left:965.5px;top:723.45px;width:939.5px;height:1px;background:#e1e6e9"></div>
<div class="r" style="left:965.5px;top:750.00px;width:939.5px;height:1px;background:#e1e6e9"></div>
<div class="r" style="left:965.5px;top:776.55px;width:939.5px;height:1px;background:#e1e6e9"></div>
<div class="r" style="left:965.5px;top:803.10px;width:939.5px;height:1px;background:#e1e6e9"></div>
<div class="r" style="left:965.5px;top:829.65px;width:939.5px;height:1px;background:#e1e6e9"></div>
<div class="r" style="left:965.5px;top:856.20px;width:939.5px;height:1px;background:#e1e6e9"></div>
<div class="r" style="left:965.5px;top:882.75px;width:939.5px;height:1px;background:#e1e6e9"></div>
<div class="r" style="left:965.5px;top:909.30px;width:939.5px;height:1px;background:#e1e6e9"></div>
<div class="r" style="left:994.4px;top:697.40px;width:1px;height:26.55px;background:#e8ecf0"></div>
<div class="r" style="left:1692.5px;top:697.40px;width:1px;height:26.55px;background:#e8ecf0"></div>
<div class="r" style="left:1760.3px;top:697.40px;width:1px;height:26.55px;background:#e8ecf0"></div>
<div class="r" style="left:1852.2px;top:697.40px;width:1px;height:26.55px;background:#e8ecf0"></div>
<div class="r" style="left:973.3px;top:704.58px;width:15px;height:12.6px;border-radius:3.5px;background:#3a8ef6;color:#fff;font-size:10px;font-weight:700;text-align:center;line-height:13px">1</div>
<svg style="position:absolute;left:1002.50px;top:706.27px" width="14" height="9" viewBox="0 0 14 9"><rect x="0.8" y="0.8" width="8.6" height="5.6" fill="none" stroke="#222" stroke-width="1.6"/><rect x="3.6" y="6.6" width="3" height="1.6" fill="#222"/><rect x="10.6" y="1.4" width="2.8" height="7" fill="#222"/><rect x="11.4" y="2.4" width="1.2" height="1" fill="#fff"/></svg>
<div class="t" style="left:1021.20px;top:705.23px;font-size:10px;font-weight:400;color:#263238;">192.168.2.4</div>
<div class="t" style="right:168.40px;top:705.23px;font-size:10px;font-weight:400;color:#263238;text-align:right;">305.38 KiB</div>
<div class="t" style="right:76.50px;top:705.23px;font-size:10px;font-weight:400;color:#263238;text-align:right;">2.38 K</div>
<div class="t" style="right:24.80px;top:705.23px;font-size:10px;font-weight:400;color:#263238;text-align:right;">2.38 K</div>
<div class="r" style="left:994.4px;top:723.95px;width:1px;height:26.55px;background:#e8ecf0"></div>
<div class="r" style="left:1692.5px;top:723.95px;width:1px;height:26.55px;background:#e8ecf0"></div>
<div class="r" style="left:1760.3px;top:723.95px;width:1px;height:26.55px;background:#e8ecf0"></div>
<div class="r" style="left:1852.2px;top:723.95px;width:1px;height:26.55px;background:#e8ecf0"></div>
<div class="r" style="left:973.3px;top:731.12px;width:15px;height:12.6px;border-radius:3.5px;background:#3db5a8;color:#fff;font-size:10px;font-weight:700;text-align:center;line-height:13px">2</div>
<svg style="position:absolute;left:1002.50px;top:732.82px" width="14" height="9" viewBox="0 0 14 9"><rect x="0.8" y="0.8" width="8.6" height="5.6" fill="none" stroke="#222" stroke-width="1.6"/><rect x="3.6" y="6.6" width="3" height="1.6" fill="#222"/><rect x="10.6" y="1.4" width="2.8" height="7" fill="#222"/><rect x="11.4" y="2.4" width="1.2" height="1" fill="#fff"/></svg>
<div class="t" style="left:1021.20px;top:731.77px;font-size:10px;font-weight:400;color:#263238;">10.59.0.106</div>
<div class="t" style="right:168.40px;top:731.77px;font-size:10px;font-weight:400;color:#263238;text-align:right;">91.43 KiB</div>
<div class="t" style="right:76.50px;top:731.77px;font-size:10px;font-weight:400;color:#263238;text-align:right;">755</div>
<div class="t" style="right:24.80px;top:731.77px;font-size:10px;font-weight:400;color:#263238;text-align:right;">755</div>
<div class="r" style="left:994.4px;top:750.50px;width:1px;height:26.55px;background:#e8ecf0"></div>
<div class="r" style="left:1692.5px;top:750.50px;width:1px;height:26.55px;background:#e8ecf0"></div>
<div class="r" style="left:1760.3px;top:750.50px;width:1px;height:26.55px;background:#e8ecf0"></div>
<div class="r" style="left:1852.2px;top:750.50px;width:1px;height:26.55px;background:#e8ecf0"></div>
<div class="r" style="left:973.3px;top:757.68px;width:15px;height:12.6px;border-radius:3.5px;background:#ea5d8a;color:#fff;font-size:10px;font-weight:700;text-align:center;line-height:13px">3</div>
<svg style="position:absolute;left:1002.50px;top:759.38px" width="14" height="9" viewBox="0 0 14 9"><rect x="0.8" y="0.8" width="8.6" height="5.6" fill="none" stroke="#222" stroke-width="1.6"/><rect x="3.6" y="6.6" width="3" height="1.6" fill="#222"/><rect x="10.6" y="1.4" width="2.8" height="7" fill="#222"/><rect x="11.4" y="2.4" width="1.2" height="1" fill="#fff"/></svg>
<div class="t" style="left:1021.20px;top:758.33px;font-size:10px;font-weight:400;color:#263238;">172.17.107.32</div>
<div class="t" style="right:168.40px;top:758.33px;font-size:10px;font-weight:400;color:#263238;text-align:right;">77.02 KiB</div>
<div class="t" style="right:76.50px;top:758.33px;font-size:10px;font-weight:400;color:#263238;text-align:right;">682</div>
<div class="t" style="right:24.80px;top:758.33px;font-size:10px;font-weight:400;color:#263238;text-align:right;">682</div>
<div class="r" style="left:994.4px;top:777.05px;width:1px;height:26.55px;background:#e8ecf0"></div>
<div class="r" style="left:1692.5px;top:777.05px;width:1px;height:26.55px;background:#e8ecf0"></div>
<div class="r" style="left:1760.3px;top:777.05px;width:1px;height:26.55px;background:#e8ecf0"></div>
<div class="r" style="left:1852.2px;top:777.05px;width:1px;height:26.55px;background:#e8ecf0"></div>
<div class="r" style="left:973.3px;top:784.23px;width:15px;height:12.6px;border-radius:3.5px;background:#dcae41;color:#fff;font-size:10px;font-weight:700;text-align:center;line-height:13px">4</div>
<svg style="position:absolute;left:1002.50px;top:785.92px" width="14" height="9" viewBox="0 0 14 9"><rect x="0.8" y="0.8" width="8.6" height="5.6" fill="none" stroke="#222" stroke-width="1.6"/><rect x="3.6" y="6.6" width="3" height="1.6" fill="#222"/><rect x="10.6" y="1.4" width="2.8" height="7" fill="#222"/><rect x="11.4" y="2.4" width="1.2" height="1" fill="#fff"/></svg>
<div class="t" style="left:1021.20px;top:784.88px;font-size:10px;font-weight:400;color:#263238;">192.168.0.95</div>
<div class="t" style="right:168.40px;top:784.88px;font-size:10px;font-weight:400;color:#263238;text-align:right;">51.48 KiB</div>
<div class="t" style="right:76.50px;top:784.88px;font-size:10px;font-weight:400;color:#263238;text-align:right;">404</div>
<div class="t" style="right:24.80px;top:784.88px;font-size:10px;font-weight:400;color:#263238;text-align:right;">404</div>
<div class="r" style="left:994.4px;top:803.60px;width:1px;height:26.55px;background:#e8ecf0"></div>
<div class="r" style="left:1692.5px;top:803.60px;width:1px;height:26.55px;background:#e8ecf0"></div>
<div class="r" style="left:1760.3px;top:803.60px;width:1px;height:26.55px;background:#e8ecf0"></div>
<div class="r" style="left:1852.2px;top:803.60px;width:1px;height:26.55px;background:#e8ecf0"></div>
<div class="r" style="left:973.3px;top:810.78px;width:15px;height:12.6px;border-radius:3.5px;background:#dd7219;color:#fff;font-size:10px;font-weight:700;text-align:center;line-height:13px">5</div>
<svg style="position:absolute;left:1002.50px;top:812.48px" width="14" height="9" viewBox="0 0 14 9"><rect x="0.8" y="0.8" width="8.6" height="5.6" fill="none" stroke="#222" stroke-width="1.6"/><rect x="3.6" y="6.6" width="3" height="1.6" fill="#222"/><rect x="10.6" y="1.4" width="2.8" height="7" fill="#222"/><rect x="11.4" y="2.4" width="1.2" height="1" fill="#fff"/></svg>
<div class="t" style="left:1021.20px;top:811.43px;font-size:10px;font-weight:400;color:#263238;">192.168.0.29</div>
<div class="t" style="right:168.40px;top:811.43px;font-size:10px;font-weight:400;color:#263238;text-align:right;">28.78 KiB</div>
<div class="t" style="right:76.50px;top:811.43px;font-size:10px;font-weight:400;color:#263238;text-align:right;">237</div>
<div class="t" style="right:24.80px;top:811.43px;font-size:10px;font-weight:400;color:#263238;text-align:right;">237</div>
<div class="r" style="left:994.4px;top:830.15px;width:1px;height:26.55px;background:#e8ecf0"></div>
<div class="r" style="left:1692.5px;top:830.15px;width:1px;height:26.55px;background:#e8ecf0"></div>
<div class="r" style="left:1760.3px;top:830.15px;width:1px;height:26.55px;background:#e8ecf0"></div>
<div class="r" style="left:1852.2px;top:830.15px;width:1px;height:26.55px;background:#e8ecf0"></div>
<div class="r" style="left:973.3px;top:837.33px;width:15px;height:12.6px;border-radius:3.5px;background:#a43b9b;color:#fff;font-size:10px;font-weight:700;text-align:center;line-height:13px">6</div>
<svg style="position:absolute;left:1002.50px;top:839.02px" width="14" height="9" viewBox="0 0 14 9"><rect x="0.8" y="0.8" width="8.6" height="5.6" fill="none" stroke="#222" stroke-width="1.6"/><rect x="3.6" y="6.6" width="3" height="1.6" fill="#222"/><rect x="10.6" y="1.4" width="2.8" height="7" fill="#222"/><rect x="11.4" y="2.4" width="1.2" height="1" fill="#fff"/></svg>
<div class="t" style="left:1021.20px;top:837.98px;font-size:10px;font-weight:400;color:#263238;">192.168.0.32</div>
<div class="t" style="right:168.40px;top:837.98px;font-size:10px;font-weight:400;color:#263238;text-align:right;">23.83 KiB</div>
<div class="t" style="right:76.50px;top:837.98px;font-size:10px;font-weight:400;color:#263238;text-align:right;">196</div>
<div class="t" style="right:24.80px;top:837.98px;font-size:10px;font-weight:400;color:#263238;text-align:right;">196</div>
<div class="r" style="left:994.4px;top:856.70px;width:1px;height:26.55px;background:#e8ecf0"></div>
<div class="r" style="left:1692.5px;top:856.70px;width:1px;height:26.55px;background:#e8ecf0"></div>
<div class="r" style="left:1760.3px;top:856.70px;width:1px;height:26.55px;background:#e8ecf0"></div>
<div class="r" style="left:1852.2px;top:856.70px;width:1px;height:26.55px;background:#e8ecf0"></div>
<div class="r" style="left:973.3px;top:863.88px;width:15px;height:12.6px;border-radius:3.5px;background:#2e7f6d;color:#fff;font-size:10px;font-weight:700;text-align:center;line-height:13px">7</div>
<svg style="position:absolute;left:1002.50px;top:865.58px" width="14" height="9" viewBox="0 0 14 9"><rect x="0.8" y="0.8" width="8.6" height="5.6" fill="none" stroke="#222" stroke-width="1.6"/><rect x="3.6" y="6.6" width="3" height="1.6" fill="#222"/><rect x="10.6" y="1.4" width="2.8" height="7" fill="#222"/><rect x="11.4" y="2.4" width="1.2" height="1" fill="#fff"/></svg>
<div class="t" style="left:1021.20px;top:864.53px;font-size:10px;font-weight:400;color:#263238;">192.168.0.103</div>
<div class="t" style="right:168.40px;top:864.53px;font-size:10px;font-weight:400;color:#263238;text-align:right;">16.03 KiB</div>
<div class="t" style="right:76.50px;top:864.53px;font-size:10px;font-weight:400;color:#263238;text-align:right;">130</div>
<div class="t" style="right:24.80px;top:864.53px;font-size:10px;font-weight:400;color:#263238;text-align:right;">130</div>
<div class="r" style="left:994.4px;top:883.25px;width:1px;height:26.55px;background:#e8ecf0"></div>
<div class="r" style="left:1692.5px;top:883.25px;width:1px;height:26.55px;background:#e8ecf0"></div>
<div class="r" style="left:1760.3px;top:883.25px;width:1px;height:26.55px;background:#e8ecf0"></div>
<div class="r" style="left:1852.2px;top:883.25px;width:1px;height:26.55px;background:#e8ecf0"></div>
<div class="r" style="left:973.3px;top:890.43px;width:15px;height:12.6px;border-radius:3.5px;background:#2451b5;color:#fff;font-size:10px;font-weight:700;text-align:center;line-height:13px">8</div>
<svg style="position:absolute;left:1002.50px;top:892.12px" width="14" height="9" viewBox="0 0 14 9"><rect x="0.8" y="0.8" width="8.6" height="5.6" fill="none" stroke="#222" stroke-width="1.6"/><rect x="3.6" y="6.6" width="3" height="1.6" fill="#222"/><rect x="10.6" y="1.4" width="2.8" height="7" fill="#222"/><rect x="11.4" y="2.4" width="1.2" height="1" fill="#fff"/></svg>
<div class="t" style="left:1021.20px;top:891.08px;font-size:10px;font-weight:400;color:#263238;">192.168.0.52</div>
<div class="t" style="right:168.40px;top:891.08px;font-size:10px;font-weight:400;color:#263238;text-align:right;">15.25 KiB</div>
<div class="t" style="right:76.50px;top:891.08px;font-size:10px;font-weight:400;color:#263238;text-align:right;">127</div>
<div class="t" style="right:24.80px;top:891.08px;font-size:10px;font-weight:400;color:#263238;text-align:right;">127</div>
<div class="r" style="left:994.4px;top:909.80px;width:1px;height:26.55px;background:#e8ecf0"></div>
<div class="r" style="left:1692.5px;top:909.80px;width:1px;height:26.55px;background:#e8ecf0"></div>
<div class="r" style="left:1760.3px;top:909.80px;width:1px;height:26.55px;background:#e8ecf0"></div>
<div class="r" style="left:1852.2px;top:909.80px;width:1px;height:26.55px;background:#e8ecf0"></div>
<div class="r" style="left:973.3px;top:916.98px;width:15px;height:12.6px;border-radius:3.5px;background:#4b0f9e;color:#fff;font-size:10px;font-weight:700;text-align:center;line-height:13px">9</div>
<svg style="position:absolute;left:1002.50px;top:918.67px" width="14" height="9" viewBox="0 0 14 9"><rect x="0.8" y="0.8" width="8.6" height="5.6" fill="none" stroke="#222" stroke-width="1.6"/><rect x="3.6" y="6.6" width="3" height="1.6" fill="#222"/><rect x="10.6" y="1.4" width="2.8" height="7" fill="#222"/><rect x="11.4" y="2.4" width="1.2" height="1" fill="#fff"/></svg>
<div class="t" style="left:1021.20px;top:917.62px;font-size:10px;font-weight:400;color:#263238;">192.168.0.112</div>
<div class="t" style="right:168.40px;top:917.62px;font-size:10px;font-weight:400;color:#263238;text-align:right;">15.02 KiB</div>
<div class="t" style="right:76.50px;top:917.62px;font-size:10px;font-weight:400;color:#263238;text-align:right;">122</div>
<div class="t" style="right:24.80px;top:917.62px;font-size:10px;font-weight:400;color:#263238;text-align:right;">122</div>
<svg style="position:absolute;left:0;top:0" width="1920" height="940" viewBox="0 0 1920 940"><defs></defs>
<line x1="110.25" y1="144" x2="110.25" y2="233.7" stroke="#dfe4e9" stroke-width="1"/>
<line x1="146.49" y1="144" x2="146.49" y2="233.7" stroke="#dfe4e9" stroke-width="1"/>
<line x1="182.73" y1="144" x2="182.73" y2="233.7" stroke="#dfe4e9" stroke-width="1"/>
<line x1="218.97" y1="144" x2="218.97" y2="233.7" stroke="#dfe4e9" stroke-width="1"/>
<line x1="255.21" y1="144" x2="255.21" y2="233.7" stroke="#dfe4e9" stroke-width="1"/>
<line x1="291.45" y1="144" x2="291.45" y2="233.7" stroke="#dfe4e9" stroke-width="1"/>
<line x1="327.69" y1="144" x2="327.69" y2="233.7" stroke="#dfe4e9" stroke-width="1"/>
<line x1="363.93" y1="144" x2="363.93" y2="233.7" stroke="#dfe4e9" stroke-width="1"/>
<line x1="400.17" y1="144" x2="400.17" y2="233.7" stroke="#dfe4e9" stroke-width="1"/>
<line x1="436.41" y1="144" x2="436.41" y2="233.7" stroke="#dfe4e9" stroke-width="1"/>
<line x1="472.65" y1="144" x2="472.65" y2="233.7" stroke="#dfe4e9" stroke-width="1"/>
<line x1="508.89" y1="144" x2="508.89" y2="233.7" stroke="#dfe4e9" stroke-width="1"/>
<line x1="545.13" y1="144" x2="545.13" y2="233.7" stroke="#dfe4e9" stroke-width="1"/>
<line x1="581.37" y1="144" x2="581.37" y2="233.7" stroke="#dfe4e9" stroke-width="1"/>
<line x1="617.61" y1="144" x2="617.61" y2="233.7" stroke="#dfe4e9" stroke-width="1"/>
<line x1="653.85" y1="144" x2="653.85" y2="233.7" stroke="#dfe4e9" stroke-width="1"/>
<line x1="690.09" y1="144" x2="690.09" y2="233.7" stroke="#dfe4e9" stroke-width="1"/>
<line x1="726.33" y1="144" x2="726.33" y2="233.7" stroke="#dfe4e9" stroke-width="1"/>
<line x1="762.57" y1="144" x2="762.57" y2="233.7" stroke="#dfe4e9" stroke-width="1"/>
<line x1="798.81" y1="144" x2="798.81" y2="233.7" stroke="#dfe4e9" stroke-width="1"/>
<line x1="835.05" y1="144" x2="835.05" y2="233.7" stroke="#dfe4e9" stroke-width="1"/>
<line x1="871.29" y1="144" x2="871.29" y2="233.7" stroke="#dfe4e9" stroke-width="1"/>
<line x1="907.53" y1="144" x2="907.53" y2="233.7" stroke="#dfe4e9" stroke-width="1"/>
<line x1="943.77" y1="144" x2="943.77" y2="233.7" stroke="#dfe4e9" stroke-width="1"/>
<line x1="73.5" y1="162.3" x2="947" y2="162.3" stroke="#dfe4e9" stroke-width="1"/>
<line x1="73.5" y1="198.5" x2="947" y2="198.5" stroke="#dfe4e9" stroke-width="1"/>
<rect x="74" y="231.20" width="3" height="2.50" fill="#f54a0f"/>
<rect x="74" y="228.20" width="3" height="3.00" fill="#2f67ef"/>
<rect x="77" y="231.70" width="3" height="2.00" fill="#f54a0f"/>
<rect x="77" y="229.20" width="3" height="2.50" fill="#2f67ef"/>
<rect x="80" y="231.20" width="3" height="2.50" fill="#f54a0f"/>
<rect x="80" y="229.20" width="3" height="2.00" fill="#2f67ef"/>
<rect x="83" y="227.28" width="3" height="6.42" fill="#f54a0f"/>
<rect x="83" y="209.87" width="3" height="17.42" fill="#2f67ef"/>
<rect x="83" y="232.70" width="3" height="1" fill="#5bc0e6"/>
<rect x="86" y="224.76" width="3" height="8.94" fill="#f54a0f"/>
<rect x="86" y="190.39" width="3" height="34.38" fill="#2f67ef"/>
<rect x="86" y="232.70" width="3" height="1" fill="#5bc0e6"/>
<rect x="89" y="230.70" width="3" height="3.00" fill="#f54a0f"/>
<rect x="89" y="229.20" width="3" height="1.50" fill="#2f67ef"/>
<rect x="92" y="231.70" width="3" height="2.00" fill="#f54a0f"/>
<rect x="92" y="227.70" width="3" height="4.00" fill="#2f67ef"/>
<rect x="95" y="230.20" width="3" height="3.50" fill="#f54a0f"/>
<rect x="95" y="219.03" width="3" height="11.17" fill="#2f67ef"/>
<rect x="98" y="230.70" width="3" height="3.00" fill="#f54a0f"/>
<rect x="98" y="229.20" width="3" height="1.50" fill="#2f67ef"/>
<rect x="101" y="228.20" width="3" height="5.50" fill="#f54a0f"/>
<rect x="101" y="211.93" width="3" height="16.27" fill="#2f67ef"/>
<rect x="101" y="232.70" width="3" height="1" fill="#5bc0e6"/>
<rect x="104" y="231.20" width="3" height="2.50" fill="#f54a0f"/>
<rect x="104" y="228.70" width="3" height="2.50" fill="#2f67ef"/>
<rect x="107" y="224.76" width="3" height="8.94" fill="#f54a0f"/>
<rect x="107" y="196.92" width="3" height="27.84" fill="#2f67ef"/>
<rect x="110" y="212.16" width="3" height="21.54" fill="#f8a51c"/>
<rect x="110" y="208.72" width="3" height="3.44" fill="#f54a0f"/>
<rect x="110" y="187.18" width="3" height="21.54" fill="#2f67ef"/>
<rect x="110" y="232.70" width="3" height="1" fill="#5bc0e6"/>
<rect x="113" y="230.70" width="3" height="3.00" fill="#f54a0f"/>
<rect x="113" y="227.70" width="3" height="3.00" fill="#2f67ef"/>
<rect x="116" y="221.55" width="3" height="12.15" fill="#f54a0f"/>
<rect x="116" y="184.89" width="3" height="36.67" fill="#2f67ef"/>
<rect x="119" y="230.70" width="3" height="3.00" fill="#f54a0f"/>
<rect x="119" y="229.20" width="3" height="1.50" fill="#2f67ef"/>
<rect x="119" y="232.70" width="3" height="1" fill="#5bc0e6"/>
<rect x="122" y="230.70" width="3" height="3.00" fill="#f54a0f"/>
<rect x="122" y="228.70" width="3" height="2.00" fill="#2f67ef"/>
<rect x="125" y="231.20" width="3" height="2.50" fill="#f54a0f"/>
<rect x="125" y="228.20" width="3" height="3.00" fill="#2f67ef"/>
<rect x="128" y="231.20" width="3" height="2.50" fill="#f54a0f"/>
<rect x="128" y="228.20" width="3" height="3.00" fill="#2f67ef"/>
<rect x="131" y="230.20" width="3" height="3.50" fill="#f54a0f"/>
<rect x="131" y="225.34" width="3" height="4.86" fill="#2f67ef"/>
<rect x="134" y="230.70" width="3" height="3.00" fill="#f54a0f"/>
<rect x="134" y="229.20" width="3" height="1.50" fill="#2f67ef"/>
<rect x="137" y="221.55" width="3" height="12.15" fill="#f54a0f"/>
<rect x="137" y="176.64" width="3" height="44.92" fill="#2f67ef"/>
<rect x="140" y="225.34" width="3" height="8.36" fill="#f54a0f"/>
<rect x="140" y="199.32" width="3" height="26.01" fill="#2f67ef"/>
<rect x="143" y="230.70" width="3" height="3.00" fill="#f54a0f"/>
<rect x="143" y="229.20" width="3" height="1.50" fill="#2f67ef"/>
<rect x="146" y="231.20" width="3" height="2.50" fill="#f54a0f"/>
<rect x="146" y="228.20" width="3" height="3.00" fill="#2f67ef"/>
<rect x="149" y="224.76" width="4" height="8.94" fill="#f54a0f"/>
<rect x="149" y="189.01" width="4" height="35.75" fill="#2f67ef"/>
<rect x="153" y="230.20" width="3" height="3.50" fill="#f54a0f"/>
<rect x="153" y="208.15" width="3" height="22.05" fill="#2f67ef"/>
<rect x="156" y="230.20" width="3" height="3.50" fill="#f54a0f"/>
<rect x="156" y="224.19" width="3" height="6.01" fill="#2f67ef"/>
<rect x="159" y="226.14" width="3" height="7.56" fill="#f54a0f"/>
<rect x="159" y="205.51" width="3" height="20.63" fill="#2f67ef"/>
<rect x="162" y="231.70" width="3" height="2.00" fill="#f54a0f"/>
<rect x="162" y="228.20" width="3" height="3.50" fill="#2f67ef"/>
<rect x="165" y="230.70" width="3" height="3.00" fill="#f54a0f"/>
<rect x="165" y="228.20" width="3" height="2.50" fill="#2f67ef"/>
<rect x="168" y="231.70" width="3" height="2.00" fill="#f54a0f"/>
<rect x="168" y="229.20" width="3" height="2.50" fill="#2f67ef"/>
<rect x="171" y="230.20" width="3" height="3.50" fill="#f54a0f"/>
<rect x="171" y="226.48" width="3" height="3.72" fill="#2f67ef"/>
<rect x="174" y="230.20" width="3" height="3.50" fill="#f54a0f"/>
<rect x="174" y="210.44" width="3" height="19.76" fill="#2f67ef"/>
<rect x="177" y="226.14" width="3" height="7.56" fill="#f54a0f"/>
<rect x="177" y="196.92" width="3" height="29.22" fill="#2f67ef"/>
<rect x="180" y="231.20" width="3" height="2.50" fill="#f54a0f"/>
<rect x="180" y="228.20" width="3" height="3.00" fill="#2f67ef"/>
<rect x="180" y="232.70" width="3" height="1" fill="#5bc0e6"/>
<rect x="183" y="209.87" width="3" height="23.83" fill="#f8a51c"/>
<rect x="183" y="208.15" width="3" height="1.72" fill="#f54a0f"/>
<rect x="183" y="159.22" width="3" height="48.93" fill="#2f67ef"/>
<rect x="183" y="232.70" width="3" height="1" fill="#5bc0e6"/>
<rect x="186" y="231.20" width="3" height="2.50" fill="#f54a0f"/>
<rect x="186" y="228.20" width="3" height="3.00" fill="#2f67ef"/>
<rect x="189" y="228.77" width="3" height="4.93" fill="#f54a0f"/>
<rect x="189" y="211.93" width="3" height="16.84" fill="#2f67ef"/>
<rect x="192" y="231.70" width="3" height="2.00" fill="#f54a0f"/>
<rect x="192" y="228.20" width="3" height="3.50" fill="#2f67ef"/>
<rect x="192" y="232.70" width="3" height="1" fill="#5bc0e6"/>
<rect x="195" y="230.20" width="3" height="3.50" fill="#f54a0f"/>
<rect x="195" y="221.55" width="3" height="8.65" fill="#2f67ef"/>
<rect x="198" y="230.70" width="3" height="3.00" fill="#f54a0f"/>
<rect x="198" y="228.70" width="3" height="2.00" fill="#2f67ef"/>
<rect x="201" y="230.20" width="3" height="3.50" fill="#f54a0f"/>
<rect x="201" y="228.20" width="3" height="2.00" fill="#2f67ef"/>
<rect x="204" y="228.20" width="3" height="5.50" fill="#f54a0f"/>
<rect x="204" y="199.32" width="3" height="28.88" fill="#2f67ef"/>
<rect x="207" y="230.20" width="3" height="3.50" fill="#f54a0f"/>
<rect x="207" y="225.91" width="3" height="4.29" fill="#2f67ef"/>
<rect x="207" y="232.70" width="3" height="1" fill="#5bc0e6"/>
<rect x="210" y="230.20" width="3" height="3.50" fill="#f54a0f"/>
<rect x="210" y="225.91" width="3" height="4.29" fill="#2f67ef"/>
<rect x="213" y="227.05" width="3" height="6.65" fill="#f54a0f"/>
<rect x="213" y="203.91" width="3" height="23.15" fill="#2f67ef"/>
<rect x="216" y="231.20" width="3" height="2.50" fill="#f54a0f"/>
<rect x="216" y="228.70" width="3" height="2.50" fill="#2f67ef"/>
<rect x="219" y="230.70" width="3" height="3.00" fill="#f54a0f"/>
<rect x="219" y="228.70" width="3" height="2.00" fill="#2f67ef"/>
<rect x="222" y="230.70" width="3" height="3.00" fill="#f54a0f"/>
<rect x="222" y="227.70" width="3" height="3.00" fill="#2f67ef"/>
<rect x="225" y="230.20" width="3" height="3.50" fill="#f54a0f"/>
<rect x="225" y="224.76" width="3" height="5.44" fill="#2f67ef"/>
<rect x="228" y="230.20" width="3" height="3.50" fill="#f54a0f"/>
<rect x="228" y="227.70" width="3" height="2.50" fill="#2f67ef"/>
<rect x="231" y="230.20" width="3" height="3.50" fill="#f54a0f"/>
<rect x="231" y="222.24" width="3" height="7.96" fill="#2f67ef"/>
<rect x="234" y="230.70" width="3" height="3.00" fill="#f54a0f"/>
<rect x="234" y="227.20" width="3" height="3.50" fill="#2f67ef"/>
<rect x="237" y="230.20" width="3" height="3.50" fill="#f54a0f"/>
<rect x="237" y="225.68" width="3" height="4.52" fill="#2f67ef"/>
<rect x="237" y="232.70" width="3" height="1" fill="#5bc0e6"/>
<rect x="240" y="230.70" width="3" height="3.00" fill="#f54a0f"/>
<rect x="240" y="227.20" width="3" height="3.50" fill="#2f67ef"/>
<rect x="240" y="232.70" width="3" height="1" fill="#5bc0e6"/>
<rect x="243" y="230.20" width="3" height="3.50" fill="#f54a0f"/>
<rect x="243" y="224.76" width="3" height="5.44" fill="#2f67ef"/>
<rect x="246" y="231.20" width="3" height="2.50" fill="#f54a0f"/>
<rect x="246" y="229.20" width="3" height="2.00" fill="#2f67ef"/>
<rect x="249" y="231.70" width="3" height="2.00" fill="#f54a0f"/>
<rect x="249" y="229.20" width="3" height="2.50" fill="#2f67ef"/>
<rect x="252" y="231.70" width="3" height="2.00" fill="#f54a0f"/>
<rect x="252" y="227.70" width="3" height="4.00" fill="#2f67ef"/>
<rect x="255" y="211.93" width="3" height="21.77" fill="#f8a51c"/>
<rect x="255" y="209.29" width="3" height="2.64" fill="#f54a0f"/>
<rect x="255" y="190.39" width="3" height="18.91" fill="#2f67ef"/>
<rect x="255" y="232.70" width="3" height="1" fill="#5bc0e6"/>
<rect x="258" y="230.20" width="3" height="3.50" fill="#f54a0f"/>
<rect x="258" y="205.05" width="3" height="25.15" fill="#2f67ef"/>
<rect x="261" y="231.20" width="3" height="2.50" fill="#f54a0f"/>
<rect x="261" y="227.20" width="3" height="4.00" fill="#2f67ef"/>
<rect x="264" y="230.20" width="3" height="3.50" fill="#f54a0f"/>
<rect x="264" y="214.45" width="3" height="15.75" fill="#2f67ef"/>
<rect x="267" y="230.70" width="3" height="3.00" fill="#f54a0f"/>
<rect x="267" y="229.20" width="3" height="1.50" fill="#2f67ef"/>
<rect x="270" y="230.70" width="3" height="3.00" fill="#f54a0f"/>
<rect x="270" y="228.20" width="3" height="2.50" fill="#2f67ef"/>
<rect x="273" y="230.20" width="3" height="3.50" fill="#f54a0f"/>
<rect x="273" y="218.46" width="3" height="11.74" fill="#2f67ef"/>
<rect x="273" y="232.70" width="3" height="1" fill="#5bc0e6"/>
<rect x="276" y="230.20" width="3" height="3.50" fill="#f54a0f"/>
<rect x="276" y="228.20" width="3" height="2.00" fill="#2f67ef"/>
<rect x="279" y="227.97" width="3" height="5.73" fill="#f54a0f"/>
<rect x="279" y="214.45" width="3" height="13.52" fill="#2f67ef"/>
<rect x="282" y="230.70" width="3" height="3.00" fill="#f54a0f"/>
<rect x="282" y="228.70" width="3" height="2.00" fill="#2f67ef"/>
<rect x="285" y="230.70" width="3" height="3.00" fill="#f54a0f"/>
<rect x="285" y="227.20" width="3" height="3.50" fill="#2f67ef"/>
<rect x="288" y="231.20" width="3" height="2.50" fill="#f54a0f"/>
<rect x="288" y="227.70" width="3" height="3.50" fill="#2f67ef"/>
<rect x="291" y="228.20" width="3" height="5.50" fill="#f54a0f"/>
<rect x="291" y="192.91" width="3" height="35.29" fill="#2f67ef"/>
<rect x="294" y="225.34" width="3" height="8.36" fill="#f54a0f"/>
<rect x="294" y="203.22" width="3" height="22.12" fill="#2f67ef"/>
<rect x="297" y="231.20" width="3" height="2.50" fill="#f54a0f"/>
<rect x="297" y="228.20" width="3" height="3.00" fill="#2f67ef"/>
<rect x="300" y="231.20" width="4" height="2.50" fill="#f54a0f"/>
<rect x="300" y="227.70" width="4" height="3.50" fill="#2f67ef"/>
<rect x="304" y="231.20" width="3" height="2.50" fill="#f54a0f"/>
<rect x="304" y="227.70" width="3" height="3.50" fill="#2f67ef"/>
<rect x="307" y="230.20" width="3" height="3.50" fill="#f54a0f"/>
<rect x="307" y="228.20" width="3" height="2.00" fill="#2f67ef"/>
<rect x="310" y="229.35" width="3" height="4.35" fill="#f54a0f"/>
<rect x="310" y="204.14" width="3" height="25.21" fill="#2f67ef"/>
<rect x="313" y="231.70" width="3" height="2.00" fill="#f54a0f"/>
<rect x="313" y="227.20" width="3" height="4.50" fill="#2f67ef"/>
<rect x="316" y="230.20" width="3" height="3.50" fill="#f54a0f"/>
<rect x="316" y="224.76" width="3" height="5.44" fill="#2f67ef"/>
<rect x="319" y="230.70" width="3" height="3.00" fill="#f54a0f"/>
<rect x="319" y="227.20" width="3" height="3.50" fill="#2f67ef"/>
<rect x="322" y="230.20" width="3" height="3.50" fill="#f54a0f"/>
<rect x="322" y="228.20" width="3" height="2.00" fill="#2f67ef"/>
<rect x="325" y="231.70" width="3" height="2.00" fill="#f54a0f"/>
<rect x="325" y="228.20" width="3" height="3.50" fill="#2f67ef"/>
<rect x="325" y="232.70" width="3" height="1" fill="#5bc0e6"/>
<rect x="328" y="212.16" width="3" height="21.54" fill="#f8a51c"/>
<rect x="328" y="209.29" width="3" height="2.86" fill="#f54a0f"/>
<rect x="328" y="189.47" width="3" height="19.82" fill="#2f67ef"/>
<rect x="328" y="232.70" width="3" height="1" fill="#5bc0e6"/>
<rect x="331" y="230.70" width="3" height="3.00" fill="#f54a0f"/>
<rect x="331" y="228.70" width="3" height="2.00" fill="#2f67ef"/>
<rect x="334" y="231.70" width="3" height="2.00" fill="#f54a0f"/>
<rect x="334" y="227.70" width="3" height="4.00" fill="#2f67ef"/>
<rect x="337" y="228.77" width="3" height="4.93" fill="#f54a0f"/>
<rect x="337" y="210.44" width="3" height="18.33" fill="#2f67ef"/>
<rect x="340" y="230.20" width="3" height="3.50" fill="#f54a0f"/>
<rect x="340" y="229.20" width="3" height="1.00" fill="#2f67ef"/>
<rect x="340" y="232.70" width="3" height="1" fill="#5bc0e6"/>
<rect x="343" y="230.20" width="3" height="3.50" fill="#f54a0f"/>
<rect x="343" y="228.20" width="3" height="2.00" fill="#2f67ef"/>
<rect x="346" y="231.20" width="3" height="2.50" fill="#f54a0f"/>
<rect x="346" y="228.20" width="3" height="3.00" fill="#2f67ef"/>
<rect x="349" y="227.28" width="3" height="6.42" fill="#f54a0f"/>
<rect x="349" y="203.22" width="3" height="24.06" fill="#2f67ef"/>
<rect x="349" y="232.70" width="3" height="1" fill="#5bc0e6"/>
<rect x="352" y="230.70" width="3" height="3.00" fill="#f54a0f"/>
<rect x="352" y="227.20" width="3" height="3.50" fill="#2f67ef"/>
<rect x="355" y="227.28" width="3" height="6.42" fill="#f54a0f"/>
<rect x="355" y="205.51" width="3" height="21.77" fill="#2f67ef"/>
<rect x="358" y="231.20" width="3" height="2.50" fill="#f54a0f"/>
<rect x="358" y="228.70" width="3" height="2.50" fill="#2f67ef"/>
<rect x="358" y="232.70" width="3" height="1" fill="#5bc0e6"/>
<rect x="361" y="230.70" width="3" height="3.00" fill="#f54a0f"/>
<rect x="361" y="227.70" width="3" height="3.00" fill="#2f67ef"/>
<rect x="364" y="230.70" width="3" height="3.00" fill="#f54a0f"/>
<rect x="364" y="228.70" width="3" height="2.00" fill="#2f67ef"/>
<rect x="367" y="226.14" width="3" height="7.56" fill="#f54a0f"/>
<rect x="367" y="204.14" width="3" height="22.00" fill="#2f67ef"/>
<rect x="370" y="230.20" width="3" height="3.50" fill="#f54a0f"/>
<rect x="370" y="223.04" width="3" height="7.16" fill="#2f67ef"/>
<rect x="373" y="230.20" width="3" height="3.50" fill="#f54a0f"/>
<rect x="373" y="227.28" width="3" height="2.92" fill="#2f67ef"/>
<rect x="376" y="230.20" width="3" height="3.50" fill="#f54a0f"/>
<rect x="376" y="227.20" width="3" height="3.00" fill="#2f67ef"/>
<rect x="376" y="232.70" width="3" height="1" fill="#5bc0e6"/>
<rect x="379" y="231.20" width="3" height="2.50" fill="#f54a0f"/>
<rect x="379" y="227.20" width="3" height="4.00" fill="#2f67ef"/>
<rect x="382" y="231.20" width="3" height="2.50" fill="#f54a0f"/>
<rect x="382" y="228.70" width="3" height="2.50" fill="#2f67ef"/>
<rect x="382" y="232.70" width="3" height="1" fill="#5bc0e6"/>
<rect x="385" y="231.20" width="3" height="2.50" fill="#f54a0f"/>
<rect x="385" y="228.70" width="3" height="2.50" fill="#2f67ef"/>
<rect x="388" y="223.39" width="3" height="10.31" fill="#f54a0f"/>
<rect x="388" y="194.40" width="3" height="28.99" fill="#2f67ef"/>
<rect x="391" y="227.28" width="3" height="6.42" fill="#f54a0f"/>
<rect x="391" y="198.41" width="3" height="28.88" fill="#2f67ef"/>
<rect x="391" y="232.70" width="3" height="1" fill="#5bc0e6"/>
<rect x="394" y="227.28" width="3" height="6.42" fill="#f54a0f"/>
<rect x="394" y="214.68" width="3" height="12.60" fill="#2f67ef"/>
<rect x="397" y="230.70" width="3" height="3.00" fill="#f54a0f"/>
<rect x="397" y="227.20" width="3" height="3.50" fill="#2f67ef"/>
<rect x="400" y="212.16" width="3" height="21.54" fill="#f8a51c"/>
<rect x="400" y="209.29" width="3" height="2.86" fill="#f54a0f"/>
<rect x="400" y="189.01" width="3" height="20.28" fill="#2f67ef"/>
<rect x="403" y="231.20" width="3" height="2.50" fill="#f54a0f"/>
<rect x="403" y="227.70" width="3" height="3.50" fill="#2f67ef"/>
<rect x="406" y="227.97" width="3" height="5.73" fill="#f54a0f"/>
<rect x="406" y="200.93" width="3" height="27.04" fill="#2f67ef"/>
<rect x="406" y="232.70" width="3" height="1" fill="#5bc0e6"/>
<rect x="409" y="231.20" width="3" height="2.50" fill="#f54a0f"/>
<rect x="409" y="228.20" width="3" height="3.00" fill="#2f67ef"/>
<rect x="412" y="230.20" width="3" height="3.50" fill="#f54a0f"/>
<rect x="412" y="219.95" width="3" height="10.25" fill="#2f67ef"/>
<rect x="412" y="232.70" width="3" height="1" fill="#5bc0e6"/>
<rect x="415" y="230.20" width="3" height="3.50" fill="#f54a0f"/>
<rect x="415" y="223.39" width="3" height="6.81" fill="#2f67ef"/>
<rect x="415" y="232.70" width="3" height="1" fill="#5bc0e6"/>
<rect x="418" y="227.28" width="3" height="6.42" fill="#f54a0f"/>
<rect x="418" y="207.35" width="3" height="19.94" fill="#2f67ef"/>
<rect x="421" y="230.20" width="3" height="3.50" fill="#f54a0f"/>
<rect x="421" y="224.19" width="3" height="6.01" fill="#2f67ef"/>
<rect x="424" y="230.70" width="3" height="3.00" fill="#f54a0f"/>
<rect x="424" y="229.20" width="3" height="1.50" fill="#2f67ef"/>
<rect x="424" y="232.70" width="3" height="1" fill="#5bc0e6"/>
<rect x="427" y="228.77" width="3" height="4.93" fill="#f54a0f"/>
<rect x="427" y="208.72" width="3" height="20.05" fill="#2f67ef"/>
<rect x="427" y="232.70" width="3" height="1" fill="#5bc0e6"/>
<rect x="430" y="230.70" width="3" height="3.00" fill="#f54a0f"/>
<rect x="430" y="229.20" width="3" height="1.50" fill="#2f67ef"/>
<rect x="433" y="231.70" width="3" height="2.00" fill="#f54a0f"/>
<rect x="433" y="229.20" width="3" height="2.50" fill="#2f67ef"/>
<rect x="436" y="228.20" width="3" height="5.50" fill="#f54a0f"/>
<rect x="436" y="206.43" width="3" height="21.77" fill="#2f67ef"/>
<rect x="439" y="230.20" width="3" height="3.50" fill="#f54a0f"/>
<rect x="439" y="224.76" width="3" height="5.44" fill="#2f67ef"/>
<rect x="442" y="230.70" width="3" height="3.00" fill="#f54a0f"/>
<rect x="442" y="227.70" width="3" height="3.00" fill="#2f67ef"/>
<rect x="445" y="231.20" width="3" height="2.50" fill="#f54a0f"/>
<rect x="445" y="227.70" width="3" height="3.50" fill="#2f67ef"/>
<rect x="448" y="226.14" width="3" height="7.56" fill="#f54a0f"/>
<rect x="448" y="206.43" width="3" height="19.71" fill="#2f67ef"/>
<rect x="451" y="227.05" width="3" height="6.65" fill="#f54a0f"/>
<rect x="451" y="201.84" width="3" height="25.21" fill="#2f67ef"/>
<rect x="451" y="232.70" width="3" height="1" fill="#5bc0e6"/>
<rect x="454" y="230.20" width="4" height="3.50" fill="#f54a0f"/>
<rect x="454" y="225.34" width="4" height="4.86" fill="#2f67ef"/>
<rect x="458" y="225.34" width="3" height="8.36" fill="#f54a0f"/>
<rect x="458" y="208.72" width="3" height="16.62" fill="#2f67ef"/>
<rect x="458" y="232.70" width="3" height="1" fill="#5bc0e6"/>
<rect x="461" y="231.20" width="3" height="2.50" fill="#f54a0f"/>
<rect x="461" y="229.20" width="3" height="2.00" fill="#2f67ef"/>
<rect x="464" y="230.20" width="3" height="3.50" fill="#f54a0f"/>
<rect x="464" y="219.95" width="3" height="10.25" fill="#2f67ef"/>
<rect x="467" y="230.20" width="3" height="3.50" fill="#f54a0f"/>
<rect x="467" y="225.68" width="3" height="4.52" fill="#2f67ef"/>
<rect x="470" y="230.20" width="3" height="3.50" fill="#f54a0f"/>
<rect x="470" y="213.88" width="3" height="16.32" fill="#2f67ef"/>
<rect x="473" y="211.93" width="3" height="21.77" fill="#f8a51c"/>
<rect x="473" y="202.42" width="3" height="9.51" fill="#f54a0f"/>
<rect x="473" y="162.31" width="3" height="40.11" fill="#2f67ef"/>
<rect x="476" y="228.20" width="3" height="5.50" fill="#f54a0f"/>
<rect x="476" y="207.35" width="3" height="20.85" fill="#2f67ef"/>
<rect x="476" y="232.70" width="3" height="1" fill="#5bc0e6"/>
<rect x="479" y="227.28" width="3" height="6.42" fill="#f54a0f"/>
<rect x="479" y="199.32" width="3" height="27.96" fill="#2f67ef"/>
<rect x="479" y="232.70" width="3" height="1" fill="#5bc0e6"/>
<rect x="482" y="230.20" width="3" height="3.50" fill="#f54a0f"/>
<rect x="482" y="214.45" width="3" height="15.75" fill="#2f67ef"/>
<rect x="485" y="230.20" width="3" height="3.50" fill="#f54a0f"/>
<rect x="485" y="220.18" width="3" height="10.02" fill="#2f67ef"/>
<rect x="488" y="230.20" width="3" height="3.50" fill="#f54a0f"/>
<rect x="488" y="225.34" width="3" height="4.86" fill="#2f67ef"/>
<rect x="491" y="230.70" width="3" height="3.00" fill="#f54a0f"/>
<rect x="491" y="228.20" width="3" height="2.50" fill="#2f67ef"/>
<rect x="494" y="231.70" width="3" height="2.00" fill="#f54a0f"/>
<rect x="494" y="227.20" width="3" height="4.50" fill="#2f67ef"/>
<rect x="497" y="230.70" width="3" height="3.00" fill="#f54a0f"/>
<rect x="497" y="227.70" width="3" height="3.00" fill="#2f67ef"/>
<rect x="500" y="224.53" width="3" height="9.17" fill="#f54a0f"/>
<rect x="500" y="201.84" width="3" height="22.69" fill="#2f67ef"/>
<rect x="503" y="230.20" width="3" height="3.50" fill="#f54a0f"/>
<rect x="503" y="211.24" width="3" height="18.96" fill="#2f67ef"/>
<rect x="503" y="232.70" width="3" height="1" fill="#5bc0e6"/>
<rect x="506" y="231.70" width="3" height="2.00" fill="#f54a0f"/>
<rect x="506" y="228.20" width="3" height="3.50" fill="#2f67ef"/>
<rect x="509" y="231.20" width="3" height="2.50" fill="#f54a0f"/>
<rect x="509" y="228.70" width="3" height="2.50" fill="#2f67ef"/>
<rect x="512" y="226.14" width="3" height="7.56" fill="#f54a0f"/>
<rect x="512" y="207.35" width="3" height="18.79" fill="#2f67ef"/>
<rect x="515" y="222.24" width="3" height="11.46" fill="#f54a0f"/>
<rect x="515" y="191.53" width="3" height="30.71" fill="#2f67ef"/>
<rect x="515" y="232.70" width="3" height="1" fill="#5bc0e6"/>
<rect x="518" y="230.70" width="3" height="3.00" fill="#f54a0f"/>
<rect x="518" y="227.70" width="3" height="3.00" fill="#2f67ef"/>
<rect x="521" y="230.20" width="3" height="3.50" fill="#f54a0f"/>
<rect x="521" y="213.07" width="3" height="17.13" fill="#2f67ef"/>
<rect x="524" y="231.20" width="3" height="2.50" fill="#f54a0f"/>
<rect x="524" y="227.20" width="3" height="4.00" fill="#2f67ef"/>
<rect x="527" y="230.20" width="3" height="3.50" fill="#f54a0f"/>
<rect x="527" y="225.68" width="3" height="4.52" fill="#2f67ef"/>
<rect x="530" y="231.70" width="3" height="2.00" fill="#f54a0f"/>
<rect x="530" y="227.20" width="3" height="4.50" fill="#2f67ef"/>
<rect x="533" y="230.70" width="3" height="3.00" fill="#f54a0f"/>
<rect x="533" y="229.20" width="3" height="1.50" fill="#2f67ef"/>
<rect x="536" y="231.20" width="3" height="2.50" fill="#f54a0f"/>
<rect x="536" y="229.20" width="3" height="2.00" fill="#2f67ef"/>
<rect x="539" y="231.70" width="3" height="2.00" fill="#f54a0f"/>
<rect x="539" y="228.20" width="3" height="3.50" fill="#2f67ef"/>
<rect x="542" y="230.70" width="3" height="3.00" fill="#f54a0f"/>
<rect x="542" y="227.70" width="3" height="3.00" fill="#2f67ef"/>
<rect x="545" y="211.58" width="3" height="22.12" fill="#f8a51c"/>
<rect x="545" y="209.64" width="3" height="1.95" fill="#f54a0f"/>
<rect x="545" y="189.81" width="3" height="19.82" fill="#2f67ef"/>
<rect x="545" y="232.70" width="3" height="1" fill="#5bc0e6"/>
<rect x="548" y="230.20" width="3" height="3.50" fill="#f54a0f"/>
<rect x="548" y="227.70" width="3" height="2.50" fill="#2f67ef"/>
<rect x="548" y="232.70" width="3" height="1" fill="#5bc0e6"/>
<rect x="551" y="231.20" width="3" height="2.50" fill="#f54a0f"/>
<rect x="551" y="229.20" width="3" height="2.00" fill="#2f67ef"/>
<rect x="554" y="231.20" width="3" height="2.50" fill="#f54a0f"/>
<rect x="554" y="228.70" width="3" height="2.50" fill="#2f67ef"/>
<rect x="557" y="231.20" width="3" height="2.50" fill="#f54a0f"/>
<rect x="557" y="227.20" width="3" height="4.00" fill="#2f67ef"/>
<rect x="560" y="230.20" width="3" height="3.50" fill="#f54a0f"/>
<rect x="560" y="207.35" width="3" height="22.85" fill="#2f67ef"/>
<rect x="563" y="228.77" width="3" height="4.93" fill="#f54a0f"/>
<rect x="563" y="221.10" width="3" height="7.68" fill="#2f67ef"/>
<rect x="566" y="231.20" width="3" height="2.50" fill="#f54a0f"/>
<rect x="566" y="229.20" width="3" height="2.00" fill="#2f67ef"/>
<rect x="566" y="232.70" width="3" height="1" fill="#5bc0e6"/>
<rect x="569" y="230.20" width="3" height="3.50" fill="#f54a0f"/>
<rect x="569" y="229.20" width="3" height="1.00" fill="#2f67ef"/>
<rect x="572" y="230.20" width="3" height="3.50" fill="#f54a0f"/>
<rect x="572" y="224.19" width="3" height="6.01" fill="#2f67ef"/>
<rect x="575" y="230.20" width="3" height="3.50" fill="#f54a0f"/>
<rect x="575" y="205.05" width="3" height="25.15" fill="#2f67ef"/>
<rect x="578" y="224.76" width="3" height="8.94" fill="#f54a0f"/>
<rect x="578" y="190.39" width="3" height="34.38" fill="#2f67ef"/>
<rect x="581" y="227.28" width="3" height="6.42" fill="#f54a0f"/>
<rect x="581" y="198.64" width="3" height="28.65" fill="#2f67ef"/>
<rect x="584" y="230.20" width="3" height="3.50" fill="#f54a0f"/>
<rect x="584" y="201.84" width="3" height="28.36" fill="#2f67ef"/>
<rect x="584" y="232.70" width="3" height="1" fill="#5bc0e6"/>
<rect x="587" y="231.20" width="3" height="2.50" fill="#f54a0f"/>
<rect x="587" y="228.70" width="3" height="2.50" fill="#2f67ef"/>
<rect x="587" y="232.70" width="3" height="1" fill="#5bc0e6"/>
<rect x="590" y="230.20" width="3" height="3.50" fill="#f54a0f"/>
<rect x="590" y="227.20" width="3" height="3.00" fill="#2f67ef"/>
<rect x="593" y="231.20" width="3" height="2.50" fill="#f54a0f"/>
<rect x="593" y="228.20" width="3" height="3.00" fill="#2f67ef"/>
<rect x="596" y="227.28" width="3" height="6.42" fill="#f54a0f"/>
<rect x="596" y="200.13" width="3" height="27.16" fill="#2f67ef"/>
<rect x="596" y="232.70" width="3" height="1" fill="#5bc0e6"/>
<rect x="599" y="230.20" width="3" height="3.50" fill="#f54a0f"/>
<rect x="599" y="213.88" width="3" height="16.32" fill="#2f67ef"/>
<rect x="602" y="230.20" width="3" height="3.50" fill="#f54a0f"/>
<rect x="602" y="220.18" width="3" height="10.02" fill="#2f67ef"/>
<rect x="605" y="230.70" width="4" height="3.00" fill="#f54a0f"/>
<rect x="605" y="228.20" width="4" height="2.50" fill="#2f67ef"/>
<rect x="609" y="230.70" width="3" height="3.00" fill="#f54a0f"/>
<rect x="609" y="228.20" width="3" height="2.50" fill="#2f67ef"/>
<rect x="609" y="232.70" width="3" height="1" fill="#5bc0e6"/>
<rect x="612" y="224.76" width="3" height="8.94" fill="#f54a0f"/>
<rect x="612" y="202.76" width="3" height="22.00" fill="#2f67ef"/>
<rect x="615" y="231.20" width="3" height="2.50" fill="#f54a0f"/>
<rect x="615" y="228.70" width="3" height="2.50" fill="#2f67ef"/>
<rect x="618" y="210.44" width="3" height="23.26" fill="#f8a51c"/>
<rect x="618" y="204.71" width="3" height="5.73" fill="#f54a0f"/>
<rect x="618" y="164.95" width="3" height="39.76" fill="#2f67ef"/>
<rect x="621" y="222.24" width="3" height="11.46" fill="#f54a0f"/>
<rect x="621" y="182.59" width="3" height="39.65" fill="#2f67ef"/>
<rect x="621" y="232.70" width="3" height="1" fill="#5bc0e6"/>
<rect x="624" y="231.20" width="3" height="2.50" fill="#f54a0f"/>
<rect x="624" y="228.20" width="3" height="3.00" fill="#2f67ef"/>
<rect x="627" y="231.20" width="3" height="2.50" fill="#f54a0f"/>
<rect x="627" y="229.20" width="3" height="2.00" fill="#2f67ef"/>
<rect x="630" y="231.20" width="3" height="2.50" fill="#f54a0f"/>
<rect x="630" y="228.20" width="3" height="3.00" fill="#2f67ef"/>
<rect x="633" y="228.20" width="3" height="5.50" fill="#f54a0f"/>
<rect x="633" y="212.16" width="3" height="16.04" fill="#2f67ef"/>
<rect x="636" y="225.34" width="3" height="8.36" fill="#f54a0f"/>
<rect x="636" y="207.35" width="3" height="17.99" fill="#2f67ef"/>
<rect x="639" y="231.20" width="3" height="2.50" fill="#f54a0f"/>
<rect x="639" y="229.20" width="3" height="2.00" fill="#2f67ef"/>
<rect x="642" y="230.20" width="3" height="3.50" fill="#f54a0f"/>
<rect x="642" y="224.76" width="3" height="5.44" fill="#2f67ef"/>
<rect x="642" y="232.70" width="3" height="1" fill="#5bc0e6"/>
<rect x="645" y="230.20" width="3" height="3.50" fill="#f54a0f"/>
<rect x="645" y="228.20" width="3" height="2.00" fill="#2f67ef"/>
<rect x="645" y="232.70" width="3" height="1" fill="#5bc0e6"/>
<rect x="648" y="230.20" width="3" height="3.50" fill="#f54a0f"/>
<rect x="648" y="215.37" width="3" height="14.83" fill="#2f67ef"/>
<rect x="651" y="230.20" width="3" height="3.50" fill="#f54a0f"/>
<rect x="651" y="222.47" width="3" height="7.73" fill="#2f67ef"/>
<rect x="654" y="230.70" width="3" height="3.00" fill="#f54a0f"/>
<rect x="654" y="227.70" width="3" height="3.00" fill="#2f67ef"/>
<rect x="657" y="230.70" width="3" height="3.00" fill="#f54a0f"/>
<rect x="657" y="227.20" width="3" height="3.50" fill="#2f67ef"/>
<rect x="657" y="232.70" width="3" height="1" fill="#5bc0e6"/>
<rect x="660" y="230.70" width="3" height="3.00" fill="#f54a0f"/>
<rect x="660" y="227.20" width="3" height="3.50" fill="#2f67ef"/>
<rect x="663" y="230.20" width="3" height="3.50" fill="#f54a0f"/>
<rect x="663" y="229.20" width="3" height="1.00" fill="#2f67ef"/>
<rect x="666" y="230.70" width="3" height="3.00" fill="#f54a0f"/>
<rect x="666" y="227.20" width="3" height="3.50" fill="#2f67ef"/>
<rect x="669" y="231.20" width="3" height="2.50" fill="#f54a0f"/>
<rect x="669" y="227.70" width="3" height="3.50" fill="#2f67ef"/>
<rect x="672" y="230.70" width="3" height="3.00" fill="#f54a0f"/>
<rect x="672" y="227.70" width="3" height="3.00" fill="#2f67ef"/>
<rect x="675" y="226.48" width="3" height="7.22" fill="#f54a0f"/>
<rect x="675" y="199.32" width="3" height="27.16" fill="#2f67ef"/>
<rect x="678" y="230.20" width="3" height="3.50" fill="#f54a0f"/>
<rect x="678" y="227.20" width="3" height="3.00" fill="#2f67ef"/>
<rect x="681" y="227.28" width="3" height="6.42" fill="#f54a0f"/>
<rect x="681" y="208.95" width="3" height="18.33" fill="#2f67ef"/>
<rect x="681" y="232.70" width="3" height="1" fill="#5bc0e6"/>
<rect x="684" y="227.28" width="3" height="6.42" fill="#f54a0f"/>
<rect x="684" y="205.51" width="3" height="21.77" fill="#2f67ef"/>
<rect x="687" y="230.70" width="3" height="3.00" fill="#f54a0f"/>
<rect x="687" y="229.20" width="3" height="1.50" fill="#2f67ef"/>
<rect x="690" y="211.93" width="3" height="21.77" fill="#f8a51c"/>
<rect x="690" y="208.72" width="3" height="3.21" fill="#f54a0f"/>
<rect x="690" y="184.89" width="3" height="23.83" fill="#2f67ef"/>
<rect x="693" y="227.28" width="3" height="6.42" fill="#f54a0f"/>
<rect x="693" y="206.43" width="3" height="20.85" fill="#2f67ef"/>
<rect x="696" y="230.20" width="3" height="3.50" fill="#f54a0f"/>
<rect x="696" y="224.76" width="3" height="5.44" fill="#2f67ef"/>
<rect x="696" y="232.70" width="3" height="1" fill="#5bc0e6"/>
<rect x="699" y="230.20" width="3" height="3.50" fill="#f54a0f"/>
<rect x="699" y="211.24" width="3" height="18.96" fill="#2f67ef"/>
<rect x="702" y="230.20" width="3" height="3.50" fill="#f54a0f"/>
<rect x="702" y="225.68" width="3" height="4.52" fill="#2f67ef"/>
<rect x="705" y="230.20" width="3" height="3.50" fill="#f54a0f"/>
<rect x="705" y="229.20" width="3" height="1.00" fill="#2f67ef"/>
<rect x="708" y="224.53" width="3" height="9.17" fill="#f54a0f"/>
<rect x="708" y="199.32" width="3" height="25.21" fill="#2f67ef"/>
<rect x="711" y="227.05" width="3" height="6.65" fill="#f54a0f"/>
<rect x="711" y="205.51" width="3" height="21.54" fill="#2f67ef"/>
<rect x="714" y="230.20" width="3" height="3.50" fill="#f54a0f"/>
<rect x="714" y="228.70" width="3" height="1.50" fill="#2f67ef"/>
<rect x="717" y="230.70" width="3" height="3.00" fill="#f54a0f"/>
<rect x="717" y="228.20" width="3" height="2.50" fill="#2f67ef"/>
<rect x="720" y="228.77" width="3" height="4.93" fill="#f54a0f"/>
<rect x="720" y="215.37" width="3" height="13.41" fill="#2f67ef"/>
<rect x="723" y="227.97" width="3" height="5.73" fill="#f54a0f"/>
<rect x="723" y="207.35" width="3" height="20.63" fill="#2f67ef"/>
<rect x="726" y="231.20" width="3" height="2.50" fill="#f54a0f"/>
<rect x="726" y="227.20" width="3" height="4.00" fill="#2f67ef"/>
<rect x="726" y="232.70" width="3" height="1" fill="#5bc0e6"/>
<rect x="729" y="231.20" width="3" height="2.50" fill="#f54a0f"/>
<rect x="729" y="228.70" width="3" height="2.50" fill="#2f67ef"/>
<rect x="732" y="228.77" width="3" height="4.93" fill="#f54a0f"/>
<rect x="732" y="217.89" width="3" height="10.89" fill="#2f67ef"/>
<rect x="735" y="231.20" width="3" height="2.50" fill="#f54a0f"/>
<rect x="735" y="227.70" width="3" height="3.50" fill="#2f67ef"/>
<rect x="735" y="232.70" width="3" height="1" fill="#5bc0e6"/>
<rect x="738" y="230.70" width="3" height="3.00" fill="#f54a0f"/>
<rect x="738" y="229.20" width="3" height="1.50" fill="#2f67ef"/>
<rect x="741" y="231.70" width="3" height="2.00" fill="#f54a0f"/>
<rect x="741" y="227.20" width="3" height="4.50" fill="#2f67ef"/>
<rect x="744" y="230.20" width="3" height="3.50" fill="#f54a0f"/>
<rect x="744" y="224.99" width="3" height="5.21" fill="#2f67ef"/>
<rect x="747" y="230.20" width="3" height="3.50" fill="#f54a0f"/>
<rect x="747" y="216.17" width="3" height="14.03" fill="#2f67ef"/>
<rect x="750" y="231.70" width="3" height="2.00" fill="#f54a0f"/>
<rect x="750" y="228.20" width="3" height="3.50" fill="#2f67ef"/>
<rect x="753" y="226.14" width="3" height="7.56" fill="#f54a0f"/>
<rect x="753" y="200.13" width="3" height="26.01" fill="#2f67ef"/>
<rect x="756" y="230.70" width="3" height="3.00" fill="#f54a0f"/>
<rect x="756" y="229.20" width="3" height="1.50" fill="#2f67ef"/>
<rect x="756" y="232.70" width="3" height="1" fill="#5bc0e6"/>
<rect x="759" y="227.97" width="4" height="5.73" fill="#f54a0f"/>
<rect x="759" y="199.32" width="4" height="28.65" fill="#2f67ef"/>
<rect x="763" y="211.93" width="3" height="21.77" fill="#f8a51c"/>
<rect x="763" y="208.72" width="3" height="3.21" fill="#f54a0f"/>
<rect x="763" y="189.01" width="3" height="19.71" fill="#2f67ef"/>
<rect x="766" y="231.70" width="3" height="2.00" fill="#f54a0f"/>
<rect x="766" y="228.70" width="3" height="3.00" fill="#2f67ef"/>
<rect x="769" y="225.34" width="3" height="8.36" fill="#f54a0f"/>
<rect x="769" y="203.22" width="3" height="22.12" fill="#2f67ef"/>
<rect x="772" y="227.63" width="3" height="6.07" fill="#f54a0f"/>
<rect x="772" y="205.51" width="3" height="22.12" fill="#2f67ef"/>
<rect x="775" y="222.24" width="3" height="11.46" fill="#f54a0f"/>
<rect x="775" y="186.72" width="3" height="35.52" fill="#2f67ef"/>
<rect x="778" y="230.20" width="3" height="3.50" fill="#f54a0f"/>
<rect x="778" y="229.20" width="3" height="1.00" fill="#2f67ef"/>
<rect x="781" y="225.34" width="3" height="8.36" fill="#f54a0f"/>
<rect x="781" y="197.03" width="3" height="28.30" fill="#2f67ef"/>
<rect x="784" y="230.20" width="3" height="3.50" fill="#f54a0f"/>
<rect x="784" y="213.07" width="3" height="17.13" fill="#2f67ef"/>
<rect x="787" y="230.49" width="3" height="3.21" fill="#f54a0f"/>
<rect x="787" y="218.80" width="3" height="11.69" fill="#2f67ef"/>
<rect x="790" y="230.20" width="3" height="3.50" fill="#f54a0f"/>
<rect x="790" y="213.88" width="3" height="16.32" fill="#2f67ef"/>
<rect x="793" y="231.20" width="3" height="2.50" fill="#f54a0f"/>
<rect x="793" y="228.20" width="3" height="3.00" fill="#2f67ef"/>
<rect x="793" y="232.70" width="3" height="1" fill="#5bc0e6"/>
<rect x="796" y="231.70" width="3" height="2.00" fill="#f54a0f"/>
<rect x="796" y="228.20" width="3" height="3.50" fill="#2f67ef"/>
<rect x="799" y="230.70" width="3" height="3.00" fill="#f54a0f"/>
<rect x="799" y="228.20" width="3" height="2.50" fill="#2f67ef"/>
<rect x="799" y="232.70" width="3" height="1" fill="#5bc0e6"/>
<rect x="802" y="230.20" width="3" height="3.50" fill="#f54a0f"/>
<rect x="802" y="228.70" width="3" height="1.50" fill="#2f67ef"/>
<rect x="802" y="232.70" width="3" height="1" fill="#5bc0e6"/>
<rect x="805" y="225.34" width="3" height="8.36" fill="#f54a0f"/>
<rect x="805" y="207.57" width="3" height="17.76" fill="#2f67ef"/>
<rect x="808" y="225.34" width="3" height="8.36" fill="#f54a0f"/>
<rect x="808" y="200.93" width="3" height="24.41" fill="#2f67ef"/>
<rect x="811" y="231.70" width="3" height="2.00" fill="#f54a0f"/>
<rect x="811" y="227.70" width="3" height="4.00" fill="#2f67ef"/>
<rect x="814" y="227.28" width="3" height="6.42" fill="#f54a0f"/>
<rect x="814" y="205.05" width="3" height="22.23" fill="#2f67ef"/>
<rect x="817" y="225.34" width="3" height="8.36" fill="#f54a0f"/>
<rect x="817" y="203.22" width="3" height="22.12" fill="#2f67ef"/>
<rect x="817" y="232.70" width="3" height="1" fill="#5bc0e6"/>
<rect x="820" y="231.20" width="3" height="2.50" fill="#f54a0f"/>
<rect x="820" y="227.20" width="3" height="4.00" fill="#2f67ef"/>
<rect x="823" y="231.20" width="3" height="2.50" fill="#f54a0f"/>
<rect x="823" y="228.70" width="3" height="2.50" fill="#2f67ef"/>
<rect x="826" y="227.28" width="3" height="6.42" fill="#f54a0f"/>
<rect x="826" y="200.93" width="3" height="26.35" fill="#2f67ef"/>
<rect x="829" y="226.14" width="3" height="7.56" fill="#f54a0f"/>
<rect x="829" y="200.13" width="3" height="26.01" fill="#2f67ef"/>
<rect x="832" y="230.70" width="3" height="3.00" fill="#f54a0f"/>
<rect x="832" y="227.20" width="3" height="3.50" fill="#2f67ef"/>
<rect x="835" y="211.93" width="3" height="21.77" fill="#f8a51c"/>
<rect x="835" y="208.72" width="3" height="3.21" fill="#f54a0f"/>
<rect x="835" y="180.99" width="3" height="27.73" fill="#2f67ef"/>
<rect x="835" y="232.70" width="3" height="1" fill="#5bc0e6"/>
<rect x="838" y="227.28" width="3" height="6.42" fill="#f54a0f"/>
<rect x="838" y="196.69" width="3" height="30.59" fill="#2f67ef"/>
<rect x="841" y="224.53" width="3" height="9.17" fill="#f54a0f"/>
<rect x="841" y="192.91" width="3" height="31.63" fill="#2f67ef"/>
<rect x="844" y="230.20" width="3" height="3.50" fill="#f54a0f"/>
<rect x="844" y="228.70" width="3" height="1.50" fill="#2f67ef"/>
<rect x="847" y="231.70" width="3" height="2.00" fill="#f54a0f"/>
<rect x="847" y="228.20" width="3" height="3.50" fill="#2f67ef"/>
<rect x="850" y="231.20" width="3" height="2.50" fill="#f54a0f"/>
<rect x="850" y="227.70" width="3" height="3.50" fill="#2f67ef"/>
<rect x="850" y="232.70" width="3" height="1" fill="#5bc0e6"/>
<rect x="853" y="231.20" width="3" height="2.50" fill="#f54a0f"/>
<rect x="853" y="228.20" width="3" height="3.00" fill="#2f67ef"/>
<rect x="856" y="230.20" width="3" height="3.50" fill="#f54a0f"/>
<rect x="856" y="228.20" width="3" height="2.00" fill="#2f67ef"/>
<rect x="859" y="231.20" width="3" height="2.50" fill="#f54a0f"/>
<rect x="859" y="227.20" width="3" height="4.00" fill="#2f67ef"/>
<rect x="862" y="228.43" width="3" height="5.27" fill="#f54a0f"/>
<rect x="862" y="208.95" width="3" height="19.48" fill="#2f67ef"/>
<rect x="865" y="230.70" width="3" height="3.00" fill="#f54a0f"/>
<rect x="865" y="227.20" width="3" height="3.50" fill="#2f67ef"/>
<rect x="865" y="232.70" width="3" height="1" fill="#5bc0e6"/>
<rect x="868" y="231.20" width="3" height="2.50" fill="#f54a0f"/>
<rect x="868" y="227.20" width="3" height="4.00" fill="#2f67ef"/>
<rect x="868" y="232.70" width="3" height="1" fill="#5bc0e6"/>
<rect x="871" y="230.70" width="3" height="3.00" fill="#f54a0f"/>
<rect x="871" y="227.70" width="3" height="3.00" fill="#2f67ef"/>
<rect x="874" y="231.20" width="3" height="2.50" fill="#f54a0f"/>
<rect x="874" y="228.20" width="3" height="3.00" fill="#2f67ef"/>
<rect x="877" y="227.28" width="3" height="6.42" fill="#f54a0f"/>
<rect x="877" y="210.44" width="3" height="16.84" fill="#2f67ef"/>
<rect x="877" y="232.70" width="3" height="1" fill="#5bc0e6"/>
<rect x="880" y="227.28" width="3" height="6.42" fill="#f54a0f"/>
<rect x="880" y="204.14" width="3" height="23.15" fill="#2f67ef"/>
<rect x="880" y="232.70" width="3" height="1" fill="#5bc0e6"/>
<rect x="883" y="230.70" width="3" height="3.00" fill="#f54a0f"/>
<rect x="883" y="228.20" width="3" height="2.50" fill="#2f67ef"/>
<rect x="883" y="232.70" width="3" height="1" fill="#5bc0e6"/>
<rect x="886" y="224.19" width="3" height="9.51" fill="#f54a0f"/>
<rect x="886" y="196.12" width="3" height="28.07" fill="#2f67ef"/>
<rect x="889" y="231.20" width="3" height="2.50" fill="#f54a0f"/>
<rect x="889" y="227.70" width="3" height="3.50" fill="#2f67ef"/>
<rect x="892" y="230.70" width="3" height="3.00" fill="#f54a0f"/>
<rect x="892" y="227.20" width="3" height="3.50" fill="#2f67ef"/>
<rect x="895" y="230.70" width="3" height="3.00" fill="#f54a0f"/>
<rect x="895" y="227.20" width="3" height="3.50" fill="#2f67ef"/>
<rect x="895" y="232.70" width="3" height="1" fill="#5bc0e6"/>
<rect x="898" y="231.20" width="3" height="2.50" fill="#f54a0f"/>
<rect x="898" y="228.20" width="3" height="3.00" fill="#2f67ef"/>
<rect x="901" y="231.20" width="3" height="2.50" fill="#f54a0f"/>
<rect x="901" y="228.20" width="3" height="3.00" fill="#2f67ef"/>
<rect x="904" y="229.35" width="3" height="4.35" fill="#f54a0f"/>
<rect x="904" y="220.75" width="3" height="8.59" fill="#2f67ef"/>
<rect x="907" y="211.93" width="3" height="21.77" fill="#f8a51c"/>
<rect x="907" y="208.72" width="3" height="3.21" fill="#f54a0f"/>
<rect x="907" y="188.09" width="3" height="20.63" fill="#2f67ef"/>
<rect x="910" y="227.63" width="4" height="6.07" fill="#f54a0f"/>
<rect x="910" y="205.05" width="4" height="22.57" fill="#2f67ef"/>
<rect x="914" y="230.20" width="3" height="3.50" fill="#f54a0f"/>
<rect x="914" y="223.39" width="3" height="6.81" fill="#2f67ef"/>
<rect x="917" y="230.70" width="3" height="3.00" fill="#f54a0f"/>
<rect x="917" y="228.20" width="3" height="2.50" fill="#2f67ef"/>
<rect x="920" y="231.20" width="3" height="2.50" fill="#f54a0f"/>
<rect x="920" y="229.20" width="3" height="2.00" fill="#2f67ef"/>
<rect x="920" y="232.70" width="3" height="1" fill="#5bc0e6"/>
<rect x="923" y="230.70" width="3" height="3.00" fill="#f54a0f"/>
<rect x="923" y="227.20" width="3" height="3.50" fill="#2f67ef"/>
<rect x="926" y="231.70" width="3" height="2.00" fill="#f54a0f"/>
<rect x="926" y="228.20" width="3" height="3.50" fill="#2f67ef"/>
<rect x="926" y="232.70" width="3" height="1" fill="#5bc0e6"/>
<rect x="929" y="230.70" width="3" height="3.00" fill="#f54a0f"/>
<rect x="929" y="227.70" width="3" height="3.00" fill="#2f67ef"/>
<rect x="932" y="225.34" width="3" height="8.36" fill="#f54a0f"/>
<rect x="932" y="196.12" width="3" height="29.22" fill="#2f67ef"/>
<rect x="932" y="232.70" width="3" height="1" fill="#5bc0e6"/>
<rect x="935" y="230.20" width="3" height="3.50" fill="#f54a0f"/>
<rect x="935" y="221.10" width="3" height="9.10" fill="#2f67ef"/>
<rect x="938" y="230.20" width="3" height="3.50" fill="#f54a0f"/>
<rect x="938" y="229.20" width="3" height="1.00" fill="#2f67ef"/>
<rect x="941" y="228.43" width="3" height="5.27" fill="#f54a0f"/>
<rect x="941" y="200.93" width="3" height="27.50" fill="#2f67ef"/>
<line x1="73.5" y1="143.8" x2="73.5" y2="233.7" stroke="#666" stroke-width="1"/>
<line x1="73.5" y1="233.7" x2="947" y2="233.7" stroke="#777" stroke-width="1.2"/>
<line x1="68.5" y1="162.3" x2="73.5" y2="162.3" stroke="#666" stroke-width="1"/>
<text x="65.5" y="165.10000000000002" text-anchor="end" font-size="7.5" fill="#666">4k</text>
<line x1="68.5" y1="198.5" x2="73.5" y2="198.5" stroke="#666" stroke-width="1"/>
<text x="65.5" y="201.3" text-anchor="end" font-size="7.5" fill="#666">2k</text>
<line x1="68.5" y1="233.6" x2="73.5" y2="233.6" stroke="#666" stroke-width="1"/>
<text x="65.5" y="236.4" text-anchor="end" font-size="7.5" fill="#666">0k</text>
<line x1="110.25" y1="233.7" x2="110.25" y2="238.5" stroke="#666" stroke-width="1"/>
<text x="110.25" y="248.2" text-anchor="middle" font-size="7.5" fill="#666">10:59</text>
<line x1="182.73" y1="233.7" x2="182.73" y2="238.5" stroke="#666" stroke-width="1"/>
<text x="182.73" y="248.2" text-anchor="middle" font-size="7.5" fill="#666">12:59</text>
<line x1="255.21" y1="233.7" x2="255.21" y2="238.5" stroke="#666" stroke-width="1"/>
<text x="255.21" y="248.2" text-anchor="middle" font-size="7.5" fill="#666">14:59</text>
<line x1="327.69" y1="233.7" x2="327.69" y2="238.5" stroke="#666" stroke-width="1"/>
<text x="327.69" y="248.2" text-anchor="middle" font-size="7.5" fill="#666">16:59</text>
<line x1="400.17" y1="233.7" x2="400.17" y2="238.5" stroke="#666" stroke-width="1"/>
<text x="400.17" y="248.2" text-anchor="middle" font-size="7.5" fill="#666">18:59</text>
<line x1="472.65" y1="233.7" x2="472.65" y2="238.5" stroke="#666" stroke-width="1"/>
<text x="472.65" y="248.2" text-anchor="middle" font-size="7.5" fill="#666">20:59</text>
<line x1="545.13" y1="233.7" x2="545.13" y2="238.5" stroke="#666" stroke-width="1"/>
<text x="545.13" y="248.2" text-anchor="middle" font-size="7.5" fill="#666">22:59</text>
<line x1="617.61" y1="233.7" x2="617.61" y2="238.5" stroke="#666" stroke-width="1"/>
<text x="617.61" y="248.2" text-anchor="middle" font-size="7.5" fill="#666">08-20 00:59</text>
<line x1="690.09" y1="233.7" x2="690.09" y2="238.5" stroke="#666" stroke-width="1"/>
<text x="690.09" y="248.2" text-anchor="middle" font-size="7.5" fill="#666">02:59</text>
<line x1="762.57" y1="233.7" x2="762.57" y2="238.5" stroke="#666" stroke-width="1"/>
<text x="762.57" y="248.2" text-anchor="middle" font-size="7.5" fill="#666">04:59</text>
<line x1="835.05" y1="233.7" x2="835.05" y2="238.5" stroke="#666" stroke-width="1"/>
<text x="835.05" y="248.2" text-anchor="middle" font-size="7.5" fill="#666">06:59</text>
<line x1="907.53" y1="233.7" x2="907.53" y2="238.5" stroke="#666" stroke-width="1"/>
<text x="907.53" y="248.2" text-anchor="middle" font-size="7.5" fill="#666">08:59</text>
<text transform="translate(34.2,188.8) rotate(-90)" text-anchor="middle" font-size="9.5" fill="#666">bits/s</text>
<line x1="1058.25" y1="144" x2="1058.25" y2="233.7" stroke="#dfe4e9" stroke-width="1"/>
<line x1="1094.49" y1="144" x2="1094.49" y2="233.7" stroke="#dfe4e9" stroke-width="1"/>
<line x1="1130.73" y1="144" x2="1130.73" y2="233.7" stroke="#dfe4e9" stroke-width="1"/>
<line x1="1166.97" y1="144" x2="1166.97" y2="233.7" stroke="#dfe4e9" stroke-width="1"/>
<line x1="1203.21" y1="144" x2="1203.21" y2="233.7" stroke="#dfe4e9" stroke-width="1"/>
<line x1="1239.45" y1="144" x2="1239.45" y2="233.7" stroke="#dfe4e9" stroke-width="1"/>
<line x1="1275.69" y1="144" x2="1275.69" y2="233.7" stroke="#dfe4e9" stroke-width="1"/>
<line x1="1311.93" y1="144" x2="1311.93" y2="233.7" stroke="#dfe4e9" stroke-width="1"/>
<line x1="1348.17" y1="144" x2="1348.17" y2="233.7" stroke="#dfe4e9" stroke-width="1"/>
<line x1="1384.41" y1="144" x2="1384.41" y2="233.7" stroke="#dfe4e9" stroke-width="1"/>
<line x1="1420.65" y1="144" x2="1420.65" y2="233.7" stroke="#dfe4e9" stroke-width="1"/>
<line x1="1456.89" y1="144" x2="1456.89" y2="233.7" stroke="#dfe4e9" stroke-width="1"/>
<line x1="1493.13" y1="144" x2="1493.13" y2="233.7" stroke="#dfe4e9" stroke-width="1"/>
<line x1="1529.37" y1="144" x2="1529.37" y2="233.7" stroke="#dfe4e9" stroke-width="1"/>
<line x1="1565.61" y1="144" x2="1565.61" y2="233.7" stroke="#dfe4e9" stroke-width="1"/>
<line x1="1601.85" y1="144" x2="1601.85" y2="233.7" stroke="#dfe4e9" stroke-width="1"/>
<line x1="1638.09" y1="144" x2="1638.09" y2="233.7" stroke="#dfe4e9" stroke-width="1"/>
<line x1="1674.33" y1="144" x2="1674.33" y2="233.7" stroke="#dfe4e9" stroke-width="1"/>
<line x1="1710.57" y1="144" x2="1710.57" y2="233.7" stroke="#dfe4e9" stroke-width="1"/>
<line x1="1746.81" y1="144" x2="1746.81" y2="233.7" stroke="#dfe4e9" stroke-width="1"/>
<line x1="1783.05" y1="144" x2="1783.05" y2="233.7" stroke="#dfe4e9" stroke-width="1"/>
<line x1="1819.29" y1="144" x2="1819.29" y2="233.7" stroke="#dfe4e9" stroke-width="1"/>
<line x1="1855.53" y1="144" x2="1855.53" y2="233.7" stroke="#dfe4e9" stroke-width="1"/>
<line x1="1891.77" y1="144" x2="1891.77" y2="233.7" stroke="#dfe4e9" stroke-width="1"/>
<line x1="1021.5" y1="170" x2="1895" y2="170" stroke="#dfe4e9" stroke-width="1"/>
<rect x="1022" y="226.82" width="3" height="6.88" fill="#f6a11b"/>
<rect x="1025" y="225.68" width="3" height="8.02" fill="#f6a11b"/>
<rect x="1028" y="231.41" width="3" height="2.29" fill="#f6a11b"/>
<rect x="1031" y="214.68" width="3" height="19.02" fill="#f6a11b"/>
<rect x="1034" y="204.14" width="3" height="29.56" fill="#f6a11b"/>
<rect x="1037" y="230.72" width="3" height="2.98" fill="#f6a11b"/>
<rect x="1040" y="222.47" width="3" height="11.23" fill="#f6a11b"/>
<rect x="1043" y="228.20" width="3" height="5.50" fill="#f6a11b"/>
<rect x="1046" y="231.41" width="3" height="2.29" fill="#f6a11b"/>
<rect x="1049" y="221.10" width="3" height="12.60" fill="#f6a11b"/>
<rect x="1052" y="228.20" width="3" height="5.50" fill="#f6a11b"/>
<rect x="1055" y="213.07" width="3" height="20.63" fill="#f6a11b"/>
<rect x="1058" y="199.32" width="3" height="34.38" fill="#f6a11b"/>
<rect x="1058" y="199.32" width="3" height="1" fill="#ee4d3a"/>
<rect x="1061" y="231.41" width="3" height="2.29" fill="#f6a11b"/>
<rect x="1064" y="213.88" width="3" height="19.82" fill="#f6a11b"/>
<rect x="1067" y="231.41" width="3" height="2.29" fill="#f6a11b"/>
<rect x="1070" y="230.72" width="3" height="2.98" fill="#f6a11b"/>
<rect x="1073" y="231.41" width="3" height="2.29" fill="#f6a11b"/>
<rect x="1076" y="231.41" width="3" height="2.29" fill="#f6a11b"/>
<rect x="1079" y="230.72" width="3" height="2.98" fill="#f6a11b"/>
<rect x="1082" y="231.41" width="3" height="2.29" fill="#f6a11b"/>
<rect x="1085" y="211.24" width="3" height="22.46" fill="#f6a11b"/>
<rect x="1088" y="221.10" width="3" height="12.60" fill="#f6a11b"/>
<rect x="1091" y="227.97" width="3" height="5.73" fill="#f6a11b"/>
<rect x="1094" y="228.77" width="3" height="4.93" fill="#f6a11b"/>
<rect x="1097" y="221.55" width="3" height="12.15" fill="#f6a11b"/>
<rect x="1100" y="198.64" width="3" height="35.06" fill="#f6a11b"/>
<rect x="1103" y="227.97" width="3" height="5.73" fill="#f6a11b"/>
<rect x="1106" y="221.10" width="3" height="12.60" fill="#f6a11b"/>
<rect x="1109" y="232.21" width="3" height="1.49" fill="#f6a11b"/>
<rect x="1112" y="227.28" width="3" height="6.42" fill="#f6a11b"/>
<rect x="1115" y="231.41" width="3" height="2.29" fill="#f6a11b"/>
<rect x="1118" y="217.89" width="3" height="15.81" fill="#f6a11b"/>
<rect x="1121" y="222.47" width="3" height="11.23" fill="#f6a11b"/>
<rect x="1124" y="159.22" width="3" height="74.48" fill="#f6a11b"/>
<rect x="1127" y="224.76" width="3" height="8.94" fill="#f6a11b"/>
<rect x="1130" y="179.16" width="3" height="54.54" fill="#f6a11b"/>
<rect x="1130" y="179.16" width="3" height="1" fill="#ee4d3a"/>
<rect x="1133" y="230.72" width="3" height="2.98" fill="#f6a11b"/>
<rect x="1136" y="228.77" width="3" height="4.93" fill="#f6a11b"/>
<rect x="1139" y="231.41" width="3" height="2.29" fill="#f6a11b"/>
<rect x="1142" y="225.68" width="4" height="8.02" fill="#f6a11b"/>
<rect x="1146" y="231.41" width="3" height="2.29" fill="#f6a11b"/>
<rect x="1149" y="229.92" width="3" height="3.78" fill="#f6a11b"/>
<rect x="1152" y="224.76" width="3" height="8.94" fill="#f6a11b"/>
<rect x="1155" y="226.48" width="3" height="7.22" fill="#f6a11b"/>
<rect x="1158" y="226.48" width="3" height="7.22" fill="#f6a11b"/>
<rect x="1161" y="199.32" width="3" height="34.38" fill="#f6a11b"/>
<rect x="1164" y="226.14" width="3" height="7.56" fill="#f6a11b"/>
<rect x="1167" y="231.41" width="3" height="2.29" fill="#f6a11b"/>
<rect x="1170" y="231.41" width="3" height="2.29" fill="#f6a11b"/>
<rect x="1173" y="231.41" width="3" height="2.29" fill="#f6a11b"/>
<rect x="1176" y="231.41" width="3" height="2.29" fill="#f6a11b"/>
<rect x="1179" y="227.97" width="3" height="5.73" fill="#f6a11b"/>
<rect x="1182" y="231.41" width="3" height="2.29" fill="#f6a11b"/>
<rect x="1185" y="230.49" width="3" height="3.21" fill="#f6a11b"/>
<rect x="1188" y="230.49" width="3" height="3.21" fill="#f6a11b"/>
<rect x="1191" y="229.57" width="3" height="4.13" fill="#f6a11b"/>
<rect x="1194" y="230.49" width="3" height="3.21" fill="#f6a11b"/>
<rect x="1197" y="223.39" width="3" height="10.31" fill="#f6a11b"/>
<rect x="1200" y="231.41" width="3" height="2.29" fill="#f6a11b"/>
<rect x="1203" y="207.35" width="3" height="26.35" fill="#f6a11b"/>
<rect x="1203" y="207.35" width="3" height="1" fill="#ee4d3a"/>
<rect x="1206" y="224.19" width="3" height="9.51" fill="#f6a11b"/>
<rect x="1209" y="231.41" width="3" height="2.29" fill="#f6a11b"/>
<rect x="1212" y="227.28" width="3" height="6.42" fill="#f6a11b"/>
<rect x="1215" y="226.48" width="3" height="7.22" fill="#f6a11b"/>
<rect x="1218" y="227.28" width="3" height="6.42" fill="#f6a11b"/>
<rect x="1221" y="225.68" width="3" height="8.02" fill="#f6a11b"/>
<rect x="1224" y="231.41" width="3" height="2.29" fill="#f6a11b"/>
<rect x="1227" y="224.19" width="3" height="9.51" fill="#f6a11b"/>
<rect x="1230" y="230.72" width="3" height="2.98" fill="#f6a11b"/>
<rect x="1233" y="231.98" width="3" height="1.72" fill="#f6a11b"/>
<rect x="1236" y="231.41" width="3" height="2.29" fill="#f6a11b"/>
<rect x="1239" y="216.17" width="3" height="17.53" fill="#f6a11b"/>
<rect x="1242" y="216.17" width="3" height="17.53" fill="#f6a11b"/>
<rect x="1245" y="226.48" width="3" height="7.22" fill="#f6a11b"/>
<rect x="1248" y="231.41" width="3" height="2.29" fill="#f6a11b"/>
<rect x="1251" y="231.98" width="3" height="1.72" fill="#f6a11b"/>
<rect x="1254" y="230.72" width="3" height="2.98" fill="#f6a11b"/>
<rect x="1257" y="205.51" width="3" height="28.19" fill="#f6a11b"/>
<rect x="1260" y="231.41" width="3" height="2.29" fill="#f6a11b"/>
<rect x="1263" y="228.77" width="3" height="4.93" fill="#f6a11b"/>
<rect x="1266" y="230.72" width="3" height="2.98" fill="#f6a11b"/>
<rect x="1269" y="226.48" width="3" height="7.22" fill="#f6a11b"/>
<rect x="1272" y="231.41" width="3" height="2.29" fill="#f6a11b"/>
<rect x="1275" y="207.35" width="3" height="26.35" fill="#f6a11b"/>
<rect x="1275" y="207.35" width="3" height="1" fill="#ee4d3a"/>
<rect x="1278" y="231.98" width="3" height="1.72" fill="#f6a11b"/>
<rect x="1281" y="231.98" width="3" height="1.72" fill="#f6a11b"/>
<rect x="1284" y="217.89" width="3" height="15.81" fill="#f6a11b"/>
<rect x="1287" y="229.57" width="3" height="4.13" fill="#f6a11b"/>
<rect x="1290" y="231.98" width="3" height="1.72" fill="#f6a11b"/>
<rect x="1293" y="227.28" width="4" height="6.42" fill="#f6a11b"/>
<rect x="1297" y="218.46" width="3" height="15.24" fill="#f6a11b"/>
<rect x="1300" y="230.72" width="3" height="2.98" fill="#f6a11b"/>
<rect x="1303" y="220.18" width="3" height="13.52" fill="#f6a11b"/>
<rect x="1306" y="231.41" width="3" height="2.29" fill="#f6a11b"/>
<rect x="1309" y="224.76" width="3" height="8.94" fill="#f6a11b"/>
<rect x="1312" y="231.41" width="3" height="2.29" fill="#f6a11b"/>
<rect x="1315" y="223.39" width="3" height="10.31" fill="#f6a11b"/>
<rect x="1318" y="230.72" width="3" height="2.98" fill="#f6a11b"/>
<rect x="1321" y="224.19" width="3" height="9.51" fill="#f6a11b"/>
<rect x="1324" y="230.72" width="3" height="2.98" fill="#f6a11b"/>
<rect x="1327" y="230.72" width="3" height="2.98" fill="#f6a11b"/>
<rect x="1330" y="227.28" width="3" height="6.42" fill="#f6a11b"/>
<rect x="1333" y="230.72" width="3" height="2.98" fill="#f6a11b"/>
<rect x="1336" y="196.69" width="3" height="37.01" fill="#f6a11b"/>
<rect x="1339" y="221.10" width="3" height="12.60" fill="#f6a11b"/>
<rect x="1342" y="231.41" width="3" height="2.29" fill="#f6a11b"/>
<rect x="1345" y="224.99" width="3" height="8.71" fill="#f6a11b"/>
<rect x="1348" y="207.35" width="3" height="26.35" fill="#f6a11b"/>
<rect x="1348" y="207.35" width="3" height="1" fill="#ee4d3a"/>
<rect x="1351" y="230.72" width="3" height="2.98" fill="#f6a11b"/>
<rect x="1354" y="199.32" width="3" height="34.38" fill="#f6a11b"/>
<rect x="1357" y="224.99" width="3" height="8.71" fill="#f6a11b"/>
<rect x="1360" y="227.28" width="3" height="6.42" fill="#f6a11b"/>
<rect x="1363" y="229.57" width="3" height="4.13" fill="#f6a11b"/>
<rect x="1366" y="218.46" width="3" height="15.24" fill="#f6a11b"/>
<rect x="1369" y="230.72" width="3" height="2.98" fill="#f6a11b"/>
<rect x="1372" y="231.41" width="3" height="2.29" fill="#f6a11b"/>
<rect x="1375" y="221.55" width="3" height="12.15" fill="#f6a11b"/>
<rect x="1378" y="225.68" width="3" height="8.02" fill="#f6a11b"/>
<rect x="1381" y="231.41" width="3" height="2.29" fill="#f6a11b"/>
<rect x="1384" y="212.73" width="3" height="20.97" fill="#f6a11b"/>
<rect x="1387" y="226.14" width="3" height="7.56" fill="#f6a11b"/>
<rect x="1390" y="226.14" width="3" height="7.56" fill="#f6a11b"/>
<rect x="1393" y="225.68" width="3" height="8.02" fill="#f6a11b"/>
<rect x="1396" y="213.88" width="3" height="19.82" fill="#f6a11b"/>
<rect x="1399" y="179.84" width="3" height="53.86" fill="#f6a11b"/>
<rect x="1402" y="231.41" width="3" height="2.29" fill="#f6a11b"/>
<rect x="1405" y="221.10" width="3" height="12.60" fill="#f6a11b"/>
<rect x="1408" y="231.41" width="3" height="2.29" fill="#f6a11b"/>
<rect x="1411" y="227.97" width="3" height="5.73" fill="#f6a11b"/>
<rect x="1414" y="230.72" width="3" height="2.98" fill="#f6a11b"/>
<rect x="1417" y="216.97" width="3" height="16.73" fill="#f6a11b"/>
<rect x="1420" y="197.49" width="3" height="36.21" fill="#f6a11b"/>
<rect x="1420" y="197.49" width="3" height="1" fill="#ee4d3a"/>
<rect x="1423" y="221.10" width="3" height="12.60" fill="#f6a11b"/>
<rect x="1426" y="217.89" width="3" height="15.81" fill="#f6a11b"/>
<rect x="1429" y="199.32" width="3" height="34.38" fill="#f6a11b"/>
<rect x="1432" y="224.19" width="3" height="9.51" fill="#f6a11b"/>
<rect x="1435" y="228.77" width="3" height="4.93" fill="#f6a11b"/>
<rect x="1438" y="231.98" width="3" height="1.72" fill="#f6a11b"/>
<rect x="1441" y="231.41" width="3" height="2.29" fill="#f6a11b"/>
<rect x="1444" y="213.88" width="3" height="19.82" fill="#f6a11b"/>
<rect x="1447" y="224.19" width="4" height="9.51" fill="#f6a11b"/>
<rect x="1451" y="219.26" width="3" height="14.44" fill="#f6a11b"/>
<rect x="1454" y="227.97" width="3" height="5.73" fill="#f6a11b"/>
<rect x="1457" y="230.72" width="3" height="2.98" fill="#f6a11b"/>
<rect x="1460" y="228.20" width="3" height="5.50" fill="#f6a11b"/>
<rect x="1463" y="199.32" width="3" height="34.38" fill="#f6a11b"/>
<rect x="1466" y="231.41" width="3" height="2.29" fill="#f6a11b"/>
<rect x="1469" y="217.89" width="3" height="15.81" fill="#f6a11b"/>
<rect x="1472" y="230.72" width="3" height="2.98" fill="#f6a11b"/>
<rect x="1475" y="230.72" width="3" height="2.98" fill="#f6a11b"/>
<rect x="1478" y="227.28" width="3" height="6.42" fill="#f6a11b"/>
<rect x="1481" y="224.99" width="3" height="8.71" fill="#f6a11b"/>
<rect x="1484" y="230.72" width="3" height="2.98" fill="#f6a11b"/>
<rect x="1487" y="223.39" width="3" height="10.31" fill="#f6a11b"/>
<rect x="1490" y="230.72" width="3" height="2.98" fill="#f6a11b"/>
<rect x="1493" y="208.15" width="3" height="25.55" fill="#f6a11b"/>
<rect x="1493" y="208.15" width="3" height="1" fill="#ee4d3a"/>
<rect x="1496" y="228.77" width="3" height="4.93" fill="#f6a11b"/>
<rect x="1499" y="230.72" width="3" height="2.98" fill="#f6a11b"/>
<rect x="1502" y="230.72" width="3" height="2.98" fill="#f6a11b"/>
<rect x="1505" y="230.72" width="3" height="2.98" fill="#f6a11b"/>
<rect x="1508" y="192.91" width="3" height="40.79" fill="#f6a11b"/>
<rect x="1511" y="227.28" width="3" height="6.42" fill="#f6a11b"/>
<rect x="1514" y="231.41" width="3" height="2.29" fill="#f6a11b"/>
<rect x="1517" y="230.72" width="3" height="2.98" fill="#f6a11b"/>
<rect x="1520" y="224.76" width="3" height="8.94" fill="#f6a11b"/>
<rect x="1523" y="225.68" width="3" height="8.02" fill="#f6a11b"/>
<rect x="1526" y="213.88" width="3" height="19.82" fill="#f6a11b"/>
<rect x="1529" y="177.78" width="3" height="55.92" fill="#f6a11b"/>
<rect x="1532" y="206.43" width="3" height="27.27" fill="#f6a11b"/>
<rect x="1535" y="230.72" width="3" height="2.98" fill="#f6a11b"/>
<rect x="1538" y="231.41" width="3" height="2.29" fill="#f6a11b"/>
<rect x="1541" y="231.98" width="3" height="1.72" fill="#f6a11b"/>
<rect x="1544" y="219.26" width="3" height="14.44" fill="#f6a11b"/>
<rect x="1547" y="224.76" width="3" height="8.94" fill="#f6a11b"/>
<rect x="1550" y="228.77" width="3" height="4.93" fill="#f6a11b"/>
<rect x="1553" y="231.41" width="3" height="2.29" fill="#f6a11b"/>
<rect x="1556" y="231.41" width="3" height="2.29" fill="#f6a11b"/>
<rect x="1559" y="216.17" width="3" height="17.53" fill="#f6a11b"/>
<rect x="1562" y="231.41" width="3" height="2.29" fill="#f6a11b"/>
<rect x="1565" y="187.18" width="3" height="46.52" fill="#f6a11b"/>
<rect x="1565" y="187.18" width="3" height="1" fill="#ee4d3a"/>
<rect x="1568" y="179.16" width="3" height="54.54" fill="#f6a11b"/>
<rect x="1571" y="231.41" width="3" height="2.29" fill="#f6a11b"/>
<rect x="1574" y="229.57" width="3" height="4.13" fill="#f6a11b"/>
<rect x="1577" y="224.76" width="3" height="8.94" fill="#f6a11b"/>
<rect x="1580" y="225.68" width="3" height="8.02" fill="#f6a11b"/>
<rect x="1583" y="228.20" width="3" height="5.50" fill="#f6a11b"/>
<rect x="1586" y="230.72" width="3" height="2.98" fill="#f6a11b"/>
<rect x="1589" y="230.72" width="3" height="2.98" fill="#f6a11b"/>
<rect x="1592" y="229.57" width="3" height="4.13" fill="#f6a11b"/>
<rect x="1595" y="219.26" width="3" height="14.44" fill="#f6a11b"/>
<rect x="1598" y="221.10" width="4" height="12.60" fill="#f6a11b"/>
<rect x="1602" y="231.98" width="3" height="1.72" fill="#f6a11b"/>
<rect x="1605" y="231.41" width="3" height="2.29" fill="#f6a11b"/>
<rect x="1608" y="229.57" width="3" height="4.13" fill="#f6a11b"/>
<rect x="1611" y="231.41" width="3" height="2.29" fill="#f6a11b"/>
<rect x="1614" y="224.76" width="3" height="8.94" fill="#f6a11b"/>
<rect x="1617" y="225.68" width="3" height="8.02" fill="#f6a11b"/>
<rect x="1620" y="228.20" width="3" height="5.50" fill="#f6a11b"/>
<rect x="1623" y="213.88" width="3" height="19.82" fill="#f6a11b"/>
<rect x="1626" y="221.55" width="3" height="12.15" fill="#f6a11b"/>
<rect x="1629" y="208.95" width="3" height="24.75" fill="#f6a11b"/>
<rect x="1632" y="221.55" width="3" height="12.15" fill="#f6a11b"/>
<rect x="1635" y="227.28" width="3" height="6.42" fill="#f6a11b"/>
<rect x="1638" y="203.56" width="3" height="30.14" fill="#f6a11b"/>
<rect x="1638" y="203.56" width="3" height="1" fill="#ee4d3a"/>
<rect x="1641" y="222.24" width="3" height="11.46" fill="#f6a11b"/>
<rect x="1644" y="225.68" width="3" height="8.02" fill="#f6a11b"/>
<rect x="1647" y="205.51" width="3" height="28.19" fill="#f6a11b"/>
<rect x="1650" y="228.77" width="3" height="4.93" fill="#f6a11b"/>
<rect x="1653" y="225.68" width="3" height="8.02" fill="#f6a11b"/>
<rect x="1656" y="222.24" width="3" height="11.46" fill="#f6a11b"/>
<rect x="1659" y="160.82" width="3" height="72.88" fill="#f6a11b"/>
<rect x="1662" y="231.41" width="3" height="2.29" fill="#f6a11b"/>
<rect x="1665" y="227.28" width="3" height="6.42" fill="#f6a11b"/>
<rect x="1668" y="225.68" width="3" height="8.02" fill="#f6a11b"/>
<rect x="1671" y="214.45" width="3" height="19.25" fill="#f6a11b"/>
<rect x="1674" y="231.41" width="3" height="2.29" fill="#f6a11b"/>
<rect x="1677" y="231.41" width="3" height="2.29" fill="#f6a11b"/>
<rect x="1680" y="230.72" width="3" height="2.98" fill="#f6a11b"/>
<rect x="1683" y="227.28" width="3" height="6.42" fill="#f6a11b"/>
<rect x="1686" y="230.72" width="3" height="2.98" fill="#f6a11b"/>
<rect x="1689" y="230.72" width="3" height="2.98" fill="#f6a11b"/>
<rect x="1692" y="228.20" width="3" height="5.50" fill="#f6a11b"/>
<rect x="1695" y="226.48" width="3" height="7.22" fill="#f6a11b"/>
<rect x="1698" y="231.98" width="3" height="1.72" fill="#f6a11b"/>
<rect x="1701" y="215.37" width="3" height="18.33" fill="#f6a11b"/>
<rect x="1704" y="229.57" width="3" height="4.13" fill="#f6a11b"/>
<rect x="1707" y="224.99" width="3" height="8.71" fill="#f6a11b"/>
<rect x="1710" y="206.43" width="3" height="27.27" fill="#f6a11b"/>
<rect x="1710" y="206.43" width="3" height="1" fill="#ee4d3a"/>
<rect x="1713" y="225.68" width="3" height="8.02" fill="#f6a11b"/>
<rect x="1716" y="221.55" width="3" height="12.15" fill="#f6a11b"/>
<rect x="1719" y="221.55" width="3" height="12.15" fill="#f6a11b"/>
<rect x="1722" y="204.14" width="3" height="29.56" fill="#f6a11b"/>
<rect x="1725" y="231.41" width="3" height="2.29" fill="#f6a11b"/>
<rect x="1728" y="220.18" width="3" height="13.52" fill="#f6a11b"/>
<rect x="1731" y="216.97" width="3" height="16.73" fill="#f6a11b"/>
<rect x="1734" y="226.48" width="3" height="7.22" fill="#f6a11b"/>
<rect x="1737" y="224.19" width="3" height="9.51" fill="#f6a11b"/>
<rect x="1740" y="226.48" width="3" height="7.22" fill="#f6a11b"/>
<rect x="1743" y="229.57" width="3" height="4.13" fill="#f6a11b"/>
<rect x="1746" y="231.41" width="3" height="2.29" fill="#f6a11b"/>
<rect x="1749" y="231.98" width="3" height="1.72" fill="#f6a11b"/>
<rect x="1752" y="221.10" width="4" height="12.60" fill="#f6a11b"/>
<rect x="1756" y="212.16" width="3" height="21.54" fill="#f6a11b"/>
<rect x="1759" y="231.98" width="3" height="1.72" fill="#f6a11b"/>
<rect x="1762" y="220.18" width="3" height="13.52" fill="#f6a11b"/>
<rect x="1765" y="224.19" width="3" height="9.51" fill="#f6a11b"/>
<rect x="1768" y="231.41" width="3" height="2.29" fill="#f6a11b"/>
<rect x="1771" y="231.41" width="3" height="2.29" fill="#f6a11b"/>
<rect x="1774" y="212.73" width="3" height="20.97" fill="#f6a11b"/>
<rect x="1777" y="221.55" width="3" height="12.15" fill="#f6a11b"/>
<rect x="1780" y="224.99" width="3" height="8.71" fill="#f6a11b"/>
<rect x="1783" y="200.13" width="3" height="33.57" fill="#f6a11b"/>
<rect x="1783" y="200.13" width="3" height="1" fill="#ee4d3a"/>
<rect x="1786" y="195.20" width="3" height="38.50" fill="#f6a11b"/>
<rect x="1789" y="209.64" width="3" height="24.06" fill="#f6a11b"/>
<rect x="1792" y="227.63" width="3" height="6.07" fill="#f6a11b"/>
<rect x="1795" y="226.48" width="3" height="7.22" fill="#f6a11b"/>
<rect x="1798" y="226.48" width="3" height="7.22" fill="#f6a11b"/>
<rect x="1801" y="229.57" width="3" height="4.13" fill="#f6a11b"/>
<rect x="1804" y="225.68" width="3" height="8.02" fill="#f6a11b"/>
<rect x="1807" y="224.19" width="3" height="9.51" fill="#f6a11b"/>
<rect x="1810" y="216.97" width="3" height="16.73" fill="#f6a11b"/>
<rect x="1813" y="230.72" width="3" height="2.98" fill="#f6a11b"/>
<rect x="1816" y="231.98" width="3" height="1.72" fill="#f6a11b"/>
<rect x="1819" y="231.98" width="3" height="1.72" fill="#f6a11b"/>
<rect x="1822" y="231.41" width="3" height="2.29" fill="#f6a11b"/>
<rect x="1825" y="221.10" width="3" height="12.60" fill="#f6a11b"/>
<rect x="1828" y="223.39" width="3" height="10.31" fill="#f6a11b"/>
<rect x="1831" y="225.68" width="3" height="8.02" fill="#f6a11b"/>
<rect x="1834" y="221.55" width="3" height="12.15" fill="#f6a11b"/>
<rect x="1837" y="227.28" width="3" height="6.42" fill="#f6a11b"/>
<rect x="1840" y="231.41" width="3" height="2.29" fill="#f6a11b"/>
<rect x="1843" y="231.41" width="3" height="2.29" fill="#f6a11b"/>
<rect x="1846" y="229.57" width="3" height="4.13" fill="#f6a11b"/>
<rect x="1849" y="225.68" width="3" height="8.02" fill="#f6a11b"/>
<rect x="1852" y="225.68" width="3" height="8.02" fill="#f6a11b"/>
<rect x="1855" y="199.32" width="3" height="34.38" fill="#f6a11b"/>
<rect x="1855" y="199.32" width="3" height="1" fill="#ee4d3a"/>
<rect x="1858" y="222.47" width="3" height="11.23" fill="#f6a11b"/>
<rect x="1861" y="228.20" width="3" height="5.50" fill="#f6a11b"/>
<rect x="1864" y="231.41" width="3" height="2.29" fill="#f6a11b"/>
<rect x="1867" y="230.72" width="3" height="2.98" fill="#f6a11b"/>
<rect x="1870" y="224.99" width="3" height="8.71" fill="#f6a11b"/>
<rect x="1873" y="224.19" width="3" height="9.51" fill="#f6a11b"/>
<rect x="1876" y="225.68" width="3" height="8.02" fill="#f6a11b"/>
<rect x="1879" y="223.39" width="3" height="10.31" fill="#f6a11b"/>
<rect x="1882" y="227.28" width="3" height="6.42" fill="#f6a11b"/>
<rect x="1885" y="230.72" width="3" height="2.98" fill="#f6a11b"/>
<rect x="1888" y="219.26" width="3" height="14.44" fill="#f6a11b"/>
<line x1="1021.5" y1="143.8" x2="1021.5" y2="233.7" stroke="#666" stroke-width="1"/>
<line x1="1021.5" y1="233.7" x2="1895" y2="233.7" stroke="#777" stroke-width="1.2"/>
<line x1="1016.5" y1="170" x2="1021.5" y2="170" stroke="#666" stroke-width="1"/>
<text x="1013.5" y="172.8" text-anchor="end" font-size="7.5" fill="#666">500</text>
<line x1="1016.5" y1="233.6" x2="1021.5" y2="233.6" stroke="#666" stroke-width="1"/>
<text x="1013.5" y="236.4" text-anchor="end" font-size="7.5" fill="#666">0</text>
<line x1="1058.25" y1="233.7" x2="1058.25" y2="238.5" stroke="#666" stroke-width="1"/>
<text x="1058.25" y="248.2" text-anchor="middle" font-size="7.5" fill="#666">10:59</text>
<line x1="1130.73" y1="233.7" x2="1130.73" y2="238.5" stroke="#666" stroke-width="1"/>
<text x="1130.73" y="248.2" text-anchor="middle" font-size="7.5" fill="#666">12:59</text>
<line x1="1203.21" y1="233.7" x2="1203.21" y2="238.5" stroke="#666" stroke-width="1"/>
<text x="1203.21" y="248.2" text-anchor="middle" font-size="7.5" fill="#666">14:59</text>
<line x1="1275.69" y1="233.7" x2="1275.69" y2="238.5" stroke="#666" stroke-width="1"/>
<text x="1275.69" y="248.2" text-anchor="middle" font-size="7.5" fill="#666">16:59</text>
<line x1="1348.17" y1="233.7" x2="1348.17" y2="238.5" stroke="#666" stroke-width="1"/>
<text x="1348.17" y="248.2" text-anchor="middle" font-size="7.5" fill="#666">18:59</text>
<line x1="1420.65" y1="233.7" x2="1420.65" y2="238.5" stroke="#666" stroke-width="1"/>
<text x="1420.65" y="248.2" text-anchor="middle" font-size="7.5" fill="#666">20:59</text>
<line x1="1493.13" y1="233.7" x2="1493.13" y2="238.5" stroke="#666" stroke-width="1"/>
<text x="1493.13" y="248.2" text-anchor="middle" font-size="7.5" fill="#666">22:59</text>
<line x1="1565.61" y1="233.7" x2="1565.61" y2="238.5" stroke="#666" stroke-width="1"/>
<text x="1565.61" y="248.2" text-anchor="middle" font-size="7.5" fill="#666">08-20 00:59</text>
<line x1="1638.09" y1="233.7" x2="1638.09" y2="238.5" stroke="#666" stroke-width="1"/>
<text x="1638.09" y="248.2" text-anchor="middle" font-size="7.5" fill="#666">02:59</text>
<line x1="1710.57" y1="233.7" x2="1710.57" y2="238.5" stroke="#666" stroke-width="1"/>
<text x="1710.57" y="248.2" text-anchor="middle" font-size="7.5" fill="#666">04:59</text>
<line x1="1783.05" y1="233.7" x2="1783.05" y2="238.5" stroke="#666" stroke-width="1"/>
<text x="1783.05" y="248.2" text-anchor="middle" font-size="7.5" fill="#666">06:59</text>
<line x1="1855.53" y1="233.7" x2="1855.53" y2="238.5" stroke="#666" stroke-width="1"/>
<text x="1855.53" y="248.2" text-anchor="middle" font-size="7.5" fill="#666">08:59</text>
<text transform="translate(982.2,188.8) rotate(-90)" text-anchor="middle" font-size="9.5" fill="#666">bits/s</text>
<linearGradient id="g1_0" x1="0" y1="0" x2="1" y2="1"><stop offset="0" stop-color="#3d9dff"/><stop offset="1" stop-color="#2f74ef"/></linearGradient>
<path d="M487.40,558.60 A51.4,51.4 0 1 1 473.58,659.51 L480.54,634.56 A25.5,25.5 0 1 0 487.40,584.50 Z" fill="url(#g1_0)" stroke="#fff" stroke-width="0.8" stroke-linejoin="round"/>
<linearGradient id="g1_1" x1="0" y1="0" x2="1" y2="1"><stop offset="0" stop-color="#3aa287"/><stop offset="1" stop-color="#40bdbd"/></linearGradient>
<path d="M473.58,659.51 A51.4,51.4 0 0 1 444.54,581.63 L466.14,595.93 A25.5,25.5 0 0 0 480.54,634.56 Z" fill="url(#g1_1)" stroke="#fff" stroke-width="0.8" stroke-linejoin="round"/>
<linearGradient id="g1_2" x1="0" y1="0" x2="1" y2="1"><stop offset="0" stop-color="#e9528a"/><stop offset="1" stop-color="#ee6c8e"/></linearGradient>
<path d="M444.54,581.63 A51.4,51.4 0 0 1 468.98,562.01 L478.26,586.19 A25.5,25.5 0 0 0 466.14,595.93 Z" fill="url(#g1_2)" stroke="#fff" stroke-width="0.8" stroke-linejoin="round"/>
<linearGradient id="g1_3" x1="0" y1="0" x2="1" y2="1"><stop offset="0" stop-color="#d5952c"/><stop offset="1" stop-color="#e3bb4c"/></linearGradient>
<path d="M468.98,562.01 A51.4,51.4 0 0 1 487.40,558.60 L487.40,584.50 A25.5,25.5 0 0 0 478.26,586.19 Z" fill="url(#g1_3)" stroke="#fff" stroke-width="0.8" stroke-linejoin="round"/>
<linearGradient id="g2_0" x1="0" y1="0" x2="1" y2="1"><stop offset="0" stop-color="#3d9dff"/><stop offset="1" stop-color="#2f74ef"/></linearGradient>
<path d="M1376.30,558.30 A51.4,51.4 0 0 1 1388.04,659.74 L1382.17,634.72 A25.7,25.7 0 0 0 1376.30,584.00 Z" fill="url(#g2_0)" stroke="#fff" stroke-width="0.8" stroke-linejoin="round"/>
<linearGradient id="g2_1" x1="0" y1="0" x2="1" y2="1"><stop offset="0" stop-color="#3aa287"/><stop offset="1" stop-color="#40bdbd"/></linearGradient>
<path d="M1388.04,659.74 A51.4,51.4 0 0 1 1343.06,648.90 L1359.68,629.30 A25.7,25.7 0 0 0 1382.17,634.72 Z" fill="url(#g2_1)" stroke="#fff" stroke-width="0.8" stroke-linejoin="round"/>
<linearGradient id="g2_2" x1="0" y1="0" x2="1" y2="1"><stop offset="0" stop-color="#e9528a"/><stop offset="1" stop-color="#ee6c8e"/></linearGradient>
<path d="M1343.06,648.90 A51.4,51.4 0 0 1 1324.94,611.76 L1350.62,610.73 A25.7,25.7 0 0 0 1359.68,629.30 Z" fill="url(#g2_2)" stroke="#fff" stroke-width="0.8" stroke-linejoin="round"/>
<linearGradient id="g2_3" x1="0" y1="0" x2="1" y2="1"><stop offset="0" stop-color="#d5952c"/><stop offset="1" stop-color="#e3bb4c"/></linearGradient>
<path d="M1324.94,611.76 A51.4,51.4 0 0 1 1329.98,587.41 L1353.14,598.55 A25.7,25.7 0 0 0 1350.62,610.73 Z" fill="url(#g2_3)" stroke="#fff" stroke-width="0.8" stroke-linejoin="round"/>
<linearGradient id="g2_4" x1="0" y1="0" x2="1" y2="1"><stop offset="0" stop-color="#d4601a"/><stop offset="1" stop-color="#e07d24"/></linearGradient>
<path d="M1329.98,587.41 A51.4,51.4 0 0 1 1338.53,574.84 L1357.41,592.27 A25.7,25.7 0 0 0 1353.14,598.55 Z" fill="url(#g2_4)" stroke="#fff" stroke-width="0.8" stroke-linejoin="round"/>
<linearGradient id="g2_5" x1="0" y1="0" x2="1" y2="1"><stop offset="0" stop-color="#9a3598"/><stop offset="1" stop-color="#b343a9"/></linearGradient>
<path d="M1338.53,574.84 A51.4,51.4 0 0 1 1348.31,566.59 L1362.30,588.15 A25.7,25.7 0 0 0 1357.41,592.27 Z" fill="url(#g2_5)" stroke="#fff" stroke-width="0.8" stroke-linejoin="round"/>
<linearGradient id="g2_6" x1="0" y1="0" x2="1" y2="1"><stop offset="0" stop-color="#277660"/><stop offset="1" stop-color="#2f8a72"/></linearGradient>
<path d="M1348.31,566.59 A51.4,51.4 0 0 1 1355.56,562.67 L1365.93,586.19 A25.7,25.7 0 0 0 1362.30,588.15 Z" fill="url(#g2_6)" stroke="#fff" stroke-width="0.8" stroke-linejoin="round"/>
<linearGradient id="g2_7" x1="0" y1="0" x2="1" y2="1"><stop offset="0" stop-color="#2550b8"/><stop offset="1" stop-color="#2c5dc4"/></linearGradient>
<path d="M1355.56,562.67 A51.4,51.4 0 0 1 1363.21,559.99 L1369.76,584.85 A25.7,25.7 0 0 0 1365.93,586.19 Z" fill="url(#g2_7)" stroke="#fff" stroke-width="0.8" stroke-linejoin="round"/>
<linearGradient id="g2_8" x1="0" y1="0" x2="1" y2="1"><stop offset="0" stop-color="#48099a"/><stop offset="1" stop-color="#520fa8"/></linearGradient>
<path d="M1363.21,559.99 A51.4,51.4 0 0 1 1370.39,558.64 L1373.35,584.17 A25.7,25.7 0 0 0 1369.76,584.85 Z" fill="url(#g2_8)" stroke="#fff" stroke-width="0.8" stroke-linejoin="round"/>
<linearGradient id="g2_9" x1="0" y1="0" x2="1" y2="1"><stop offset="0" stop-color="#8a4a1a"/><stop offset="1" stop-color="#9a5a25"/></linearGradient>
<path d="M1370.39,558.64 A51.4,51.4 0 0 1 1375.67,558.30 L1375.99,584.00 A25.7,25.7 0 0 0 1373.35,584.17 Z" fill="url(#g2_9)" stroke="#fff" stroke-width="0.8" stroke-linejoin="round"/>
<linearGradient id="g3_0" x1="0" y1="0" x2="1" y2="1"><stop offset="0" stop-color="#f47c0c"/><stop offset="1" stop-color="#fab92c"/></linearGradient>
<path d="M1494.80,558.30 A51.4,51.4 0 0 1 1494.80,661.10 L1494.80,635.40 A25.7,25.7 0 0 0 1494.80,584.00 Z" fill="url(#g3_0)" stroke="#fff" stroke-width="0.8" stroke-linejoin="round"/>
<linearGradient id="g3_1" x1="0" y1="0" x2="1" y2="1"><stop offset="0" stop-color="#2f72ee"/><stop offset="1" stop-color="#3a5cf0"/></linearGradient>
<path d="M1494.80,661.10 A51.4,51.4 0 0 1 1461.21,570.79 L1478.01,590.25 A25.7,25.7 0 0 0 1494.80,635.40 Z" fill="url(#g3_1)" stroke="#fff" stroke-width="0.8" stroke-linejoin="round"/>
<linearGradient id="g3_2" x1="0" y1="0" x2="1" y2="1"><stop offset="0" stop-color="#e5340a"/><stop offset="1" stop-color="#f45a22"/></linearGradient>
<path d="M1461.21,570.79 A51.4,51.4 0 0 1 1494.80,558.30 L1494.80,584.00 A25.7,25.7 0 0 0 1478.01,590.25 Z" fill="url(#g3_2)" stroke="#fff" stroke-width="0.8" stroke-linejoin="round"/>
</svg>
</body></html>
